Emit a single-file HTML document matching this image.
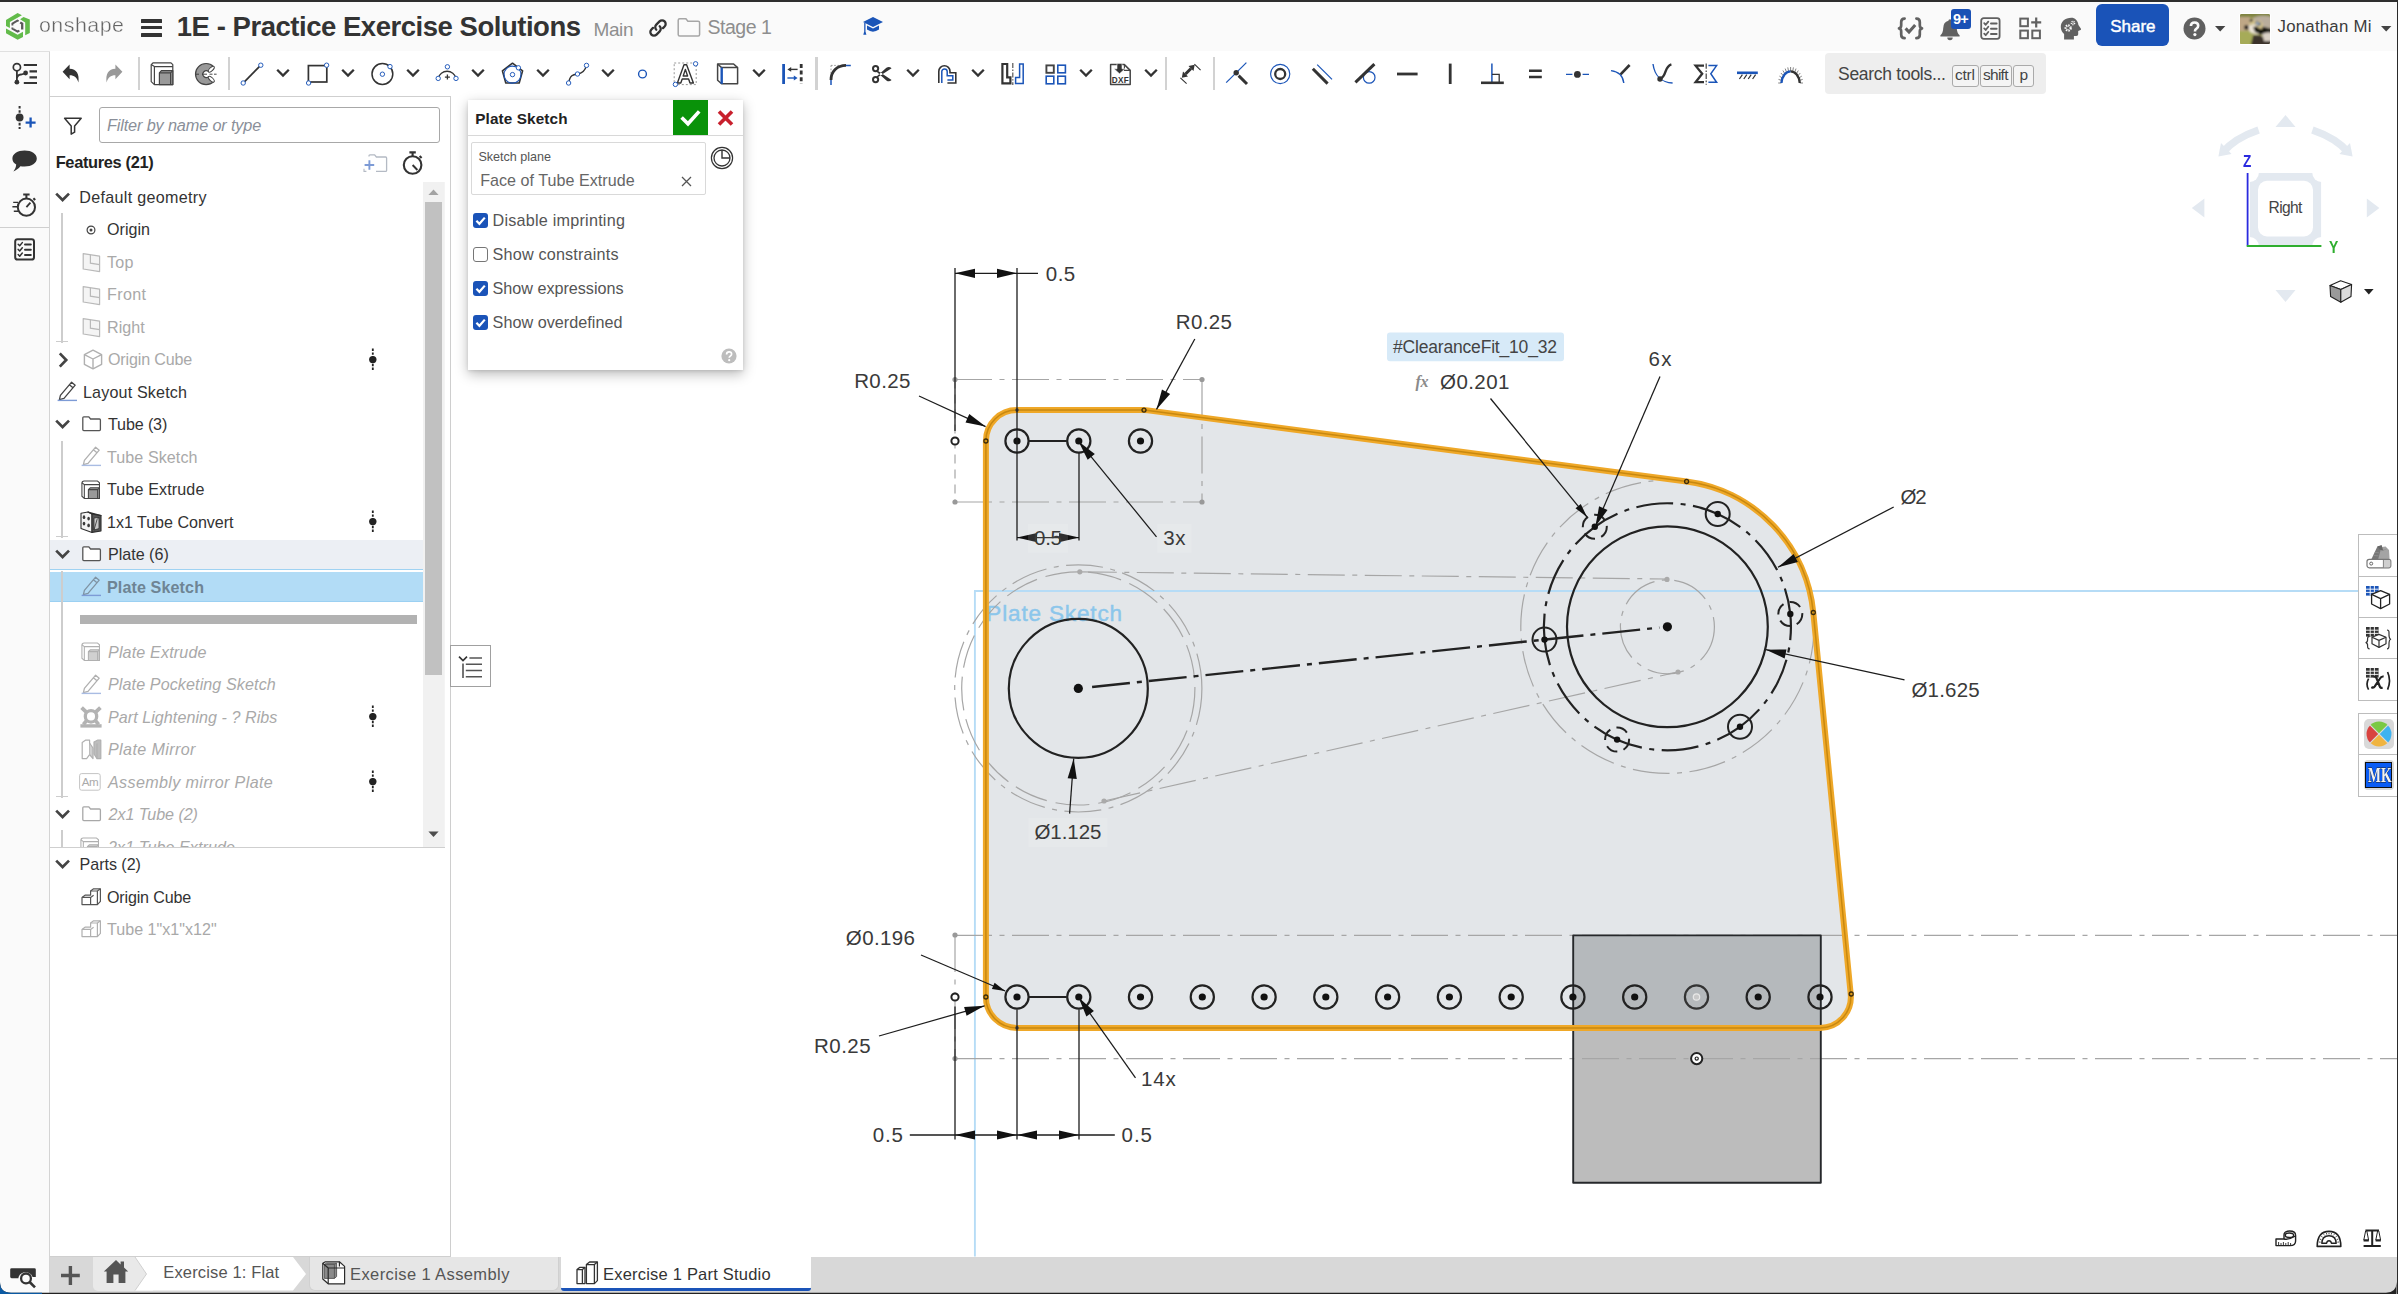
<!DOCTYPE html>
<html><head><meta charset="utf-8"><title>1E - Practice Exercise Solutions</title>
<style>
html,body{margin:0;padding:0;}
body{width:2398px;height:1294px;overflow:hidden;position:relative;background:#fff;font-family:"Liberation Sans",sans-serif;}
.t{position:absolute;white-space:pre;line-height:1em;}
.b{position:absolute;box-sizing:border-box;}
svg{overflow:visible;}
svg text{font-family:"Liberation Sans",sans-serif;}
</style></head><body>
<div class="b" style="left:0px;top:0px;width:2398px;height:51px;background:#fafafa;"></div>
<div class="b" style="left:0px;top:51px;width:50px;height:1243px;background:#fafafa;border-right:1px solid #d4d4d4;"></div>
<div class="b" style="left:0px;top:51px;width:50px;height:1px;background:#e0e0e0;"></div>
<div class="b" style="left:0px;top:227px;width:49px;height:1px;background:#cfcfcf;"></div>
<div class="b" style="left:50px;top:96px;width:401px;height:1px;background:#cfcfcf;"></div>
<div class="b" style="left:450px;top:96px;width:1px;height:1161px;background:#cecece;"></div>
<div class="b" style="left:50px;top:1257px;width:2348px;height:36px;background:#d8d8d8;"></div>
<svg class="b" style="left:0px;top:0px;" width="40" height="50" viewBox="0 0 40 50"><g fill="#62bb4a">
<path d="M17.6 13 L21.9 15.3 L9.9 21.9 L9.9 27.9 L6 26.1 L6 19.9 Z"/>
<path d="M20.1 19.3 L23.5 16.9 L29.8 19.6 L29.8 32.9 L25.2 35.3 L25.2 22.6 Z"/>
<path d="M6 28.4 L17.6 34.7 L23 31.8 L23 36.9 L17.6 39.8 L6 33.2 Z"/></g>
<g fill="none" stroke="#5a5a5a" stroke-width="1.9" stroke-linejoin="miter">
<path d="M18.6 21.2 L17.4 20.6 L12.4 23.6 L12.4 25.4"/><path d="M12.4 27.6 L12.4 28.6 L17.6 31.6 L19.4 30.6"/><path d="M20.2 22.4 L22.2 23.6 L22.2 29.4" stroke-width="2.3"/></g></svg>
<span class="t" style="left:39.1px;top:14.9px;font-size:20.8px;color:#646464;letter-spacing:0.45px;transform:scaleX(1.0291);transform-origin:0 0;-webkit-text-stroke:0.38px #fafafa;">onshape</span>
<div class="b" style="left:141px;top:19px;width:21px;height:3.6px;background:#333;border-radius:0.5px;"></div>
<div class="b" style="left:141px;top:25.8px;width:21px;height:3.6px;background:#333;border-radius:0.5px;"></div>
<div class="b" style="left:141px;top:33px;width:21px;height:3.6px;background:#333;border-radius:0.5px;"></div>
<span class="t" style="left:176.8px;top:12.5px;font-size:27.5px;color:#333;letter-spacing:-0.470px;font-weight:bold;">1E - Practice Exercise Solutions</span>
<span class="t" style="left:593.5px;top:19.7px;font-size:19px;color:#8e8e8e;letter-spacing:-0.395px;">Main</span>
<svg class="b" style="left:647px;top:17px;" width="22" height="22" viewBox="0 0 22 22"><g fill="none" stroke="#333" stroke-width="2.3" stroke-linecap="round">
<path d="M9.3 12.7 a3.6 3.6 0 0 1 0 -5.1 l3.2 -3.2 a3.6 3.6 0 0 1 5.1 5.1 l-1.6 1.6"/>
<path d="M12.7 9.3 a3.6 3.6 0 0 1 0 5.1 l-3.2 3.2 a3.6 3.6 0 0 1 -5.1 -5.1 l1.6 -1.6"/></g></svg>
<svg class="b" style="left:677px;top:17px;" width="24" height="21" viewBox="0 0 24 21"><path d="M1.2 3.2 a1.5 1.5 0 0 1 1.5 -1.5 h6.2 l2 2.6 h10.2 a1.5 1.5 0 0 1 1.5 1.5 v11.6 a1.5 1.5 0 0 1 -1.5 1.5 h-18.4 a1.5 1.5 0 0 1 -1.5 -1.5 z" fill="#fafafa" stroke="#a6a6a6" stroke-width="1.5"/></svg>
<span class="t" style="left:707.5px;top:18.1px;font-size:19.5px;color:#8e8e8e;letter-spacing:-0.486px;">Stage 1</span>
<svg class="b" style="left:862px;top:16px;" width="22" height="20" viewBox="0 0 22 20"><g fill="#1b55b8"><path d="M11 1 L21 6 L11 11 L1 6 Z"/><path d="M5 9.6 L11 12.6 L17 9.6 L17 13.6 Q11 17.8 5 13.6 Z" />
<path d="M2.2 7 h1.3 v8.5 l0.9 3.2 h-3.1 l0.9 -3.2 z"/></g></svg>
<svg class="b" style="left:1897px;top:17px;" width="27" height="23" viewBox="0 0 27 23"><g fill="none" stroke="#616161" stroke-linecap="round" stroke-linejoin="round">
<path d="M7.6 1.6 q-3.4 0 -3.4 3.4 v3.2 q0 2.8 -2.2 3.2 q2.2 0.4 2.2 3.2 v3.2 q0 3.4 3.4 3.4" stroke-width="2.7"/>
<path d="M19.4 1.6 q3.4 0 3.4 3.4 v3.2 q0 2.8 2.2 3.2 q-2.2 0.4 -2.2 3.2 v3.2 q0 3.4 -3.4 3.4" stroke-width="2.7"/>
<path d="M8.6 11.4 l3.4 3.6 l6.2 -7" stroke-width="3.1" stroke-linecap="butt" stroke-linejoin="miter"/></g></svg>
<svg class="b" style="left:1939px;top:18px;" width="24" height="23" viewBox="0 0 24 23"><g fill="#616161"><path d="M11 1.2 q1.6 0 1.6 1.6 q5.2 1.5 5.2 7.4 q0 4.6 2.8 7 v1.3 h-19.2 v-1.3 q2.8 -2.4 2.8 -7 q0 -5.9 5.2 -7.4 q0 -1.6 1.6 -1.6 z"/><path d="M8.3 19.6 h5.4 a2.7 2.7 0 0 1 -5.4 0 z"/></g></svg>
<div class="b" style="left:1950.8px;top:9px;width:20px;height:20px;background:#1a51b5;border-radius:3px;"></div>
<span class="t" style="left:1953.0px;top:12.3px;font-size:14.5px;color:#fff;letter-spacing:-0.731px;font-weight:bold;">9+</span>
<svg class="b" style="left:1980px;top:17px;" width="21" height="23" viewBox="0 0 21 23"><g fill="none" stroke="#616161" stroke-width="1.8" stroke-linecap="round" stroke-linejoin="round">
<rect x="1.2" y="1.2" width="18.4" height="20.6" rx="2.5"/>
<path d="M4.2 6.2 l1.5 1.6 l2.6 -3.2 M4.2 11.4 l1.5 1.6 l2.6 -3.2 M4.2 16.6 l1.5 1.6 l2.6 -3.2"/>
<path d="M11 6.5 h5.6 M11 11.7 h5.6 M11 16.9 h5.6" stroke-width="2"/></g></svg>
<svg class="b" style="left:2019px;top:17px;" width="24" height="23" viewBox="0 0 24 23"><g fill="none" stroke="#616161" stroke-width="2">
<rect x="1.3" y="1.6" width="7.6" height="7.6"/><rect x="1.3" y="13.6" width="7.6" height="7.6"/><rect x="13.3" y="13.6" width="7.6" height="7.6"/>
<path d="M17.2 0.4 v10 M12.2 5.4 h10" stroke-width="2.2"/></g></svg>
<svg class="b" style="left:2059px;top:17px;" width="23" height="23" viewBox="0 0 23 23"><g transform="translate(23 0) scale(-1 1)"><path d="M10.6 0.8 c6.4 0 10.6 3.9 10.6 9.2 c0 3.4 -1.7 5.4 -3.3 7 v5.4 h-9.8 v-3.4 h-2.3 c-1.4 0 -2 -0.8 -2 -2 v-3 l-2.3 -1 c-0.7 -0.3 -0.6 -0.9 -0.3 -1.4 l2.4 -3.7 c0.4 -4.4 3.6 -7.1 7 -7.1 z" fill="#616161"/></g>
<g fill="none" stroke="#fafafa"><circle cx="9.2" cy="11" r="2.5" stroke-width="2.3" stroke-dasharray="1.4 0.9"/><circle cx="14" cy="6" r="1.5" stroke-width="1.7" stroke-dasharray="1 0.7"/></g></svg>
<div class="b" style="left:2096px;top:4px;width:73px;height:42px;background:#1a53b8;border-radius:6px;"></div>
<span class="t" style="left:2110.3px;top:17.8px;font-size:17px;color:#fff;letter-spacing:-0.040px;-webkit-text-stroke:0.45px #fff;">Share</span>
<svg class="b" style="left:2183px;top:16.5px;" width="23" height="23" viewBox="0 0 23 23"><circle cx="11.5" cy="11.5" r="11" fill="#606060"/>
<path d="M7.9 9.1 q0 -3.6 3.7 -3.6 q3.6 0 3.6 3.2 q0 1.9 -1.7 2.9 q-1.5 0.9 -1.5 2.3 v0.5" fill="none" stroke="#fafafa" stroke-width="2.6"/><circle cx="11.9" cy="17.6" r="1.6" fill="#fafafa"/></svg>
<svg class="b" style="left:2214.5px;top:25.5px;" width="11" height="6" viewBox="0 0 11 6"><path d="M0 0 h10.4 l-5.2 5.6 z" fill="#444"/></svg>
<div class="b" style="left:2239px;top:13px;width:32px;height:32px;background:#fff;border-radius:3px;"></div>
<svg class="b" style="left:2240px;top:14px;" width="30" height="30" viewBox="0 0 30 30"><defs><clipPath id="av"><rect width="30" height="30" rx="1.6"/></clipPath><filter id="avb" x="-20%" y="-20%" width="140%" height="140%"><feGaussianBlur stdDeviation="0.9"/></filter></defs>
<g clip-path="url(#av)"><rect width="30" height="30" fill="#9c9a58"/><g filter="url(#avb)">
<rect x="-2" y="-2" width="34" height="5" fill="#7f8440"/>
<rect x="-2" y="3" width="12" height="14" fill="#bfa786"/>
<rect x="-2" y="17" width="14" height="15" fill="#a6ab58"/>
<path d="M13 4 Q20 0 32 3 V15 L14 14 Z" fill="#b9ad9c"/>
<path d="M8 12 Q12 9 19 11 L22 19 Q16 22 10 18 Z" fill="#ece4d6"/>
<ellipse cx="6.4" cy="13.4" rx="2.2" ry="2.4" fill="#141414"/>
<path d="M13 13 L20 12 L32 15 V20 L22 21 L15 18 Z" fill="#141210"/>
<path d="M22 20 Q28 17 32 19 V27 L24 27 Z" fill="#d9d0c6"/>
<path d="M11 30 L13 22 Q18 20 23 23 L24 27 L32 27 V32 H11 Z" fill="#3a302a"/>
<path d="M9 6 L13 4.6 L15 7 L20 6.6 L23 10 L22 15 L19 14.6 L14.4 10 L9.4 10 Z" fill="#d6c48c"/>
<ellipse cx="11.2" cy="6.6" rx="2" ry="1.2" transform="rotate(-20 11.2 6.6)" fill="#2a2a30"/>
<ellipse cx="18" cy="9.6" rx="3" ry="2" transform="rotate(20 18 9.6)" fill="#5f6d80"/>
<ellipse cx="17.4" cy="9.6" rx="1.2" ry="1" fill="#c5d0dc"/>
</g></g></svg>
<span class="t" style="left:2277.5px;top:19.2px;font-size:16.8px;color:#3c3c3c;letter-spacing:0.247px;">Jonathan Mi</span>
<svg class="b" style="left:2380.5px;top:25.5px;" width="11" height="6" viewBox="0 0 11 6"><path d="M0 0 h10.4 l-5.2 5.6 z" fill="#444"/></svg>
<div class="b" style="left:1825px;top:53px;width:221px;height:41px;background:#eeeeee;border-radius:4px;"></div>
<span class="t" style="left:1838.0px;top:66.0px;font-size:17.5px;color:#444;letter-spacing:-0.277px;">Search tools...</span>
<div class="b" style="left:1951.5px;top:65px;width:27px;height:21.5px;background:#f4f4f4;border:1px solid #aaa;border-radius:3px;"></div>
<span class="t" style="left:1955.0px;top:67.4px;font-size:15.5px;color:#444;letter-spacing:-0.220px;">ctrl</span>
<div class="b" style="left:1979.5px;top:65px;width:32.5px;height:21.5px;background:#f4f4f4;border:1px solid #aaa;border-radius:3px;"></div>
<span class="t" style="left:1983.0px;top:67.4px;font-size:15.5px;color:#444;letter-spacing:-0.731px;">shift</span>
<div class="b" style="left:2012.5px;top:65px;width:21.5px;height:21.5px;background:#f4f4f4;border:1px solid #aaa;border-radius:3px;"></div>
<span class="t" style="left:2019.5px;top:67.4px;font-size:15.5px;color:#444;">p</span>
<svg class="b" style="left:10px;top:61px;" width="28" height="25" viewBox="0 0 28 25"><g stroke="#333" fill="none">
<path d="M13.8 4 h13.2 M19.5 10.4 h7.5 M19.5 16.4 h7.5 M13.8 22 h13.2" stroke-width="2.2"/>
<circle cx="6.9" cy="6.2" r="3.6" stroke-width="1.7"/>
<path d="M6.9 10 V21 M6.9 17.5 q0.2 -3.6 4 -4 l4 -1" stroke-width="1.8"/></g>
<circle cx="6.9" cy="21.2" r="2.4" fill="#333"/><circle cx="15.6" cy="12" r="2.4" fill="#333"/></svg>
<svg class="b" style="left:58px;top:61.5px;" width="24" height="24" viewBox="0 0 24 24"><path d="M4.6 9.8 L11.6 2.6 L11.6 6.8 C18.6 6.8 21.6 12.4 20.4 20.4 C19 15.6 16.4 13.2 11.6 13.2 L11.6 17.2 Z" fill="#333"/></svg>
<svg class="b" style="left:103px;top:61.5px;" width="24" height="24" viewBox="0 0 24 24"><path d="M19.4 9.8 L12.4 2.6 L12.4 6.8 C5.4 6.8 2.4 12.4 3.6 20.4 C5 15.6 7.6 13.2 12.4 13.2 L12.4 17.2 Z" fill="#999"/></svg>
<div class="b" style="left:137.7px;top:57px;width:2.6px;height:33px;background:#d2d2d2;"></div>
<svg class="b" style="left:150px;top:61.5px;" width="24" height="24" viewBox="0 0 24 24"><g stroke="#444" stroke-width="1.2" fill="none" stroke-linejoin="round">
<path d="M1.2 2.6 L3.2 0.8 H21 L22.8 2.6 V22.6 H4.4 L1.2 19.6 Z" fill="#fff"/><path d="M1.2 2.6 L4.4 4.6 V22.6 M4.4 4.6 H22.8"/>
<path d="M9.4 10.8 L11.4 8.6 H22.8 V22.6 H9.4 Z" fill="#999"/><path d="M9.4 10.8 H20.6 V22.6 M20.6 10.8 L22.8 8.6" /></g></svg>
<svg class="b" style="left:194px;top:61.5px;" width="24" height="24" viewBox="0 0 24 24"><path d="M19.6 4.6 A10.6 10.6 0 1 0 19.6 19.6 L14.6 14.6 A3.4 3.4 0 1 1 14.6 9.6 Z" fill="#999" stroke="#444" stroke-width="1.2" stroke-linejoin="round"/>
<ellipse cx="17.3" cy="7.2" rx="3.8" ry="1.7" transform="rotate(-45 17.3 7.2)" fill="#fff" stroke="#444" stroke-width="1"/>
<ellipse cx="17.3" cy="17.2" rx="3.8" ry="1.7" transform="rotate(45 17.3 17.2)" fill="#fff" stroke="#444" stroke-width="1"/>
<path d="M2 12.2 h3 M8 12.2 h5 M15.5 12.2 h3 M20 12.2 h2.6" stroke="#333" stroke-width="0.9"/></svg>
<div class="b" style="left:227.7px;top:57px;width:2.6px;height:33px;background:#d2d2d2;"></div>
<svg class="b" style="left:240px;top:61.5px;" width="24" height="24" viewBox="0 0 24 24"><path d="M3.4 20.8 L20.6 3.4" stroke="#333" stroke-width="1.7"/><circle cx="3.2" cy="21" r="2.2" fill="#fff" stroke="#1b55b8" stroke-width="0.95"/><circle cx="20.8" cy="3.2" r="2.2" fill="#fff" stroke="#1b55b8" stroke-width="0.95"/></svg>
<svg class="b" style="left:276px;top:68.4px;" width="14" height="10" viewBox="0 0 14 10"><path d="M1.2 1.8 L7 7.6 L12.8 1.8" fill="none" stroke="#333" stroke-width="2.3"/></svg>
<svg class="b" style="left:305px;top:61.5px;" width="24" height="24" viewBox="0 0 24 24"><rect x="3.4" y="3.6" width="18.4" height="16.4" fill="none" stroke="#333" stroke-width="1.7"/><circle cx="21.6" cy="3.2" r="2.2" fill="#fff" stroke="#1b55b8" stroke-width="0.95"/><circle cx="3.6" cy="21" r="2.2" fill="#fff" stroke="#1b55b8" stroke-width="0.95"/></svg>
<svg class="b" style="left:341px;top:68.4px;" width="14" height="10" viewBox="0 0 14 10"><path d="M1.2 1.8 L7 7.6 L12.8 1.8" fill="none" stroke="#333" stroke-width="2.3"/></svg>
<svg class="b" style="left:370px;top:61.5px;" width="24" height="24" viewBox="0 0 24 24"><circle cx="12.4" cy="12" r="10.4" fill="none" stroke="#333" stroke-width="1.5"/><circle cx="12.4" cy="12.2" r="2.2" fill="#fff" stroke="#1b55b8" stroke-width="0.95"/><circle cx="20" cy="4.6" r="2.2" fill="#fff" stroke="#1b55b8" stroke-width="0.95"/></svg>
<svg class="b" style="left:406px;top:68.4px;" width="14" height="10" viewBox="0 0 14 10"><path d="M1.2 1.8 L7 7.6 L12.8 1.8" fill="none" stroke="#333" stroke-width="2.3"/></svg>
<svg class="b" style="left:435px;top:61.5px;" width="24" height="24" viewBox="0 0 24 24"><path d="M3.2 16.4 A9.2 9.6 0 0 1 21 16.4" fill="none" stroke="#333" stroke-width="1.5"/><path d="M12.4 12.6 v5 M9.9 15.1 h5" stroke="#333" stroke-width="1.3"/><circle cx="3.2" cy="16.4" r="2.2" fill="#fff" stroke="#1b55b8" stroke-width="0.95"/><circle cx="12.4" cy="4.8" r="2.2" fill="#fff" stroke="#1b55b8" stroke-width="0.95"/><circle cx="21" cy="16.4" r="2.2" fill="#fff" stroke="#1b55b8" stroke-width="0.95"/></svg>
<svg class="b" style="left:471px;top:68.4px;" width="14" height="10" viewBox="0 0 14 10"><path d="M1.2 1.8 L7 7.6 L12.8 1.8" fill="none" stroke="#333" stroke-width="2.3"/></svg>
<svg class="b" style="left:500px;top:61.5px;" width="24" height="24" viewBox="0 0 24 24"><path d="M12.5 1.2 L22.6 8.8 L19.2 21 H5.8 L2.4 8.8 Z" fill="none" stroke="#333" stroke-width="1.6" stroke-linejoin="round"/><circle cx="12.5" cy="12.6" r="8.5" fill="none" stroke="#1b55b8" stroke-width="1.1"/><circle cx="12.5" cy="12.6" r="2.2" fill="#fff" stroke="#1b55b8" stroke-width="0.95"/><circle cx="18.4" cy="5.8" r="2.2" fill="#fff" stroke="#1b55b8" stroke-width="0.95"/></svg>
<svg class="b" style="left:536px;top:68.4px;" width="14" height="10" viewBox="0 0 14 10"><path d="M1.2 1.8 L7 7.6 L12.8 1.8" fill="none" stroke="#333" stroke-width="2.3"/></svg>
<svg class="b" style="left:565px;top:61.5px;" width="24" height="24" viewBox="0 0 24 24"><path d="M3.6 21 C5 13 8 12.6 12.4 12 C17 11.4 20 9 21.4 3.6" fill="none" stroke="#333" stroke-width="1.5"/><circle cx="3.6" cy="21" r="2.2" fill="#fff" stroke="#1b55b8" stroke-width="0.95"/><circle cx="12.5" cy="12" r="2.2" fill="#fff" stroke="#1b55b8" stroke-width="0.95"/><circle cx="21.5" cy="3.4" r="2.2" fill="#fff" stroke="#1b55b8" stroke-width="0.95"/></svg>
<svg class="b" style="left:601px;top:68.4px;" width="14" height="10" viewBox="0 0 14 10"><path d="M1.2 1.8 L7 7.6 L12.8 1.8" fill="none" stroke="#333" stroke-width="2.3"/></svg>
<svg class="b" style="left:630px;top:61.5px;" width="24" height="24" viewBox="0 0 24 24"><circle cx="12.5" cy="12" r="3.9" fill="#fff" stroke="#1b55b8" stroke-width="1.4"/></svg>
<svg class="b" style="left:673px;top:61.5px;" width="24" height="24" viewBox="0 0 24 24"><rect x="1.2" y="1" width="22" height="21.6" fill="none" stroke="#999" stroke-width="1" stroke-dasharray="2 2"/>
<path d="M4.4 21 L11 2.8 H13.6 L20.4 21 H17 L15.6 17 H9.2 L7.8 21 Z M10.2 14 H14.6 L12.4 7.4 Z" fill="#fff" stroke="#333" stroke-width="1.4" stroke-linejoin="round"/><circle cx="22.6" cy="1.8" r="2.2" fill="#fff" stroke="#1b55b8" stroke-width="0.95"/><circle cx="2.4" cy="22.4" r="2.2" fill="#fff" stroke="#1b55b8" stroke-width="0.95"/></svg>
<svg class="b" style="left:716px;top:61.5px;" width="24" height="24" viewBox="0 0 24 24"><g fill="none" stroke="#444" stroke-width="1.5" stroke-linejoin="round"><path d="M1.6 2 H17.6 L21.6 5.6 V21.8 H5.6 L1.6 18.2 Z"/><path d="M5.6 5.6 H21.6 M1.6 2 L5.6 5.6"/></g>
<path d="M5.7 5.6 V21.8" stroke="#1b55b8" stroke-width="2.4"/></svg>
<svg class="b" style="left:752px;top:68.4px;" width="14" height="10" viewBox="0 0 14 10"><path d="M1.2 1.8 L7 7.6 L12.8 1.8" fill="none" stroke="#333" stroke-width="2.3"/></svg>
<svg class="b" style="left:781px;top:61.5px;" width="24" height="24" viewBox="0 0 24 24"><path d="M2.6 2 V22" stroke="#1b55b8" stroke-width="2.8"/><path d="M20.2 2 V22" stroke="#333" stroke-width="2.8" stroke-dasharray="4 2.6"/>
<path d="M9 7.4 H16.6" stroke="#333" stroke-width="1.4"/><path d="M6.4 7.4 L10.2 5 V9.8 Z" fill="#333"/>
<path d="M6.4 16 H14" stroke="#1b55b8" stroke-width="1.4"/><path d="M16.6 16 L12.8 13.6 V18.4 Z" fill="#1b55b8"/></svg>
<div class="b" style="left:815.2px;top:57px;width:2.6px;height:33px;background:#d2d2d2;"></div>
<svg class="b" style="left:828px;top:61.5px;" width="24" height="24" viewBox="0 0 24 24"><path d="M3 3.4 H17.6 M3 3.4 V18" stroke="#999" stroke-width="1" stroke-dasharray="1.6 1.6" fill="none"/>
<path d="M3 23 V17.6 M17.4 3.4 H22.8" stroke="#1b55b8" stroke-width="1.5"/>
<path d="M3 18 C3 9.6 9 3.4 18 3.4" fill="none" stroke="#333" stroke-width="2.8"/></svg>
<svg class="b" style="left:870px;top:61.5px;" width="24" height="24" viewBox="0 0 24 24"><g fill="none" stroke="#333"><circle cx="5.6" cy="6.6" r="2.6" stroke-width="2"/><circle cx="5.6" cy="17.6" r="2.6" stroke-width="2"/></g>
<path d="M7.4 8.6 L21.6 18 Q19 20.4 16.4 18.4 L6.6 9.8 Z M7.4 15.6 L21.6 6.2 Q19 3.8 16.4 5.8 L6.6 14.4 Z" fill="#333"/><circle cx="11.3" cy="12.1" r="1" fill="#fff"/></svg>
<svg class="b" style="left:906px;top:68.4px;" width="14" height="10" viewBox="0 0 14 10"><path d="M1.2 1.8 L7 7.6 L12.8 1.8" fill="none" stroke="#333" stroke-width="2.3"/></svg>
<svg class="b" style="left:935px;top:61.5px;" width="24" height="24" viewBox="0 0 24 24"><path d="M3.8 21 V9.4 A5.6 5.6 0 0 1 15 9.4 V10.8 H20.8 V21 H12.4" fill="none" stroke="#333" stroke-width="1.6"/>
<path d="M6.8 21 V9.6 A2.7 2.7 0 0 1 12.2 9.6 V13.8 H17.8 V18 H12.4" fill="none" stroke="#1b55b8" stroke-width="1.5"/></svg>
<svg class="b" style="left:971px;top:68.4px;" width="14" height="10" viewBox="0 0 14 10"><path d="M1.2 1.8 L7 7.6 L12.8 1.8" fill="none" stroke="#333" stroke-width="2.3"/></svg>
<svg class="b" style="left:1000px;top:61.5px;" width="24" height="24" viewBox="0 0 24 24"><path d="M2.4 2 V21.4 H10.4 V15.4 H7.2 V2 Z" fill="none" stroke="#333" stroke-width="2.2"/>
<path d="M23.2 2 V21.4 H15.6 V15.4 H19.6 V2 Z" fill="none" stroke="#1b55b8" stroke-width="1.5"/>
<path d="M12.8 1 V23" stroke="#555" stroke-width="1.2" stroke-dasharray="5 1.6 1.4 1.6"/></svg>
<svg class="b" style="left:1043px;top:61.5px;" width="24" height="24" viewBox="0 0 24 24"><rect x="3.4" y="3.4" width="7.4" height="7.4" fill="none" stroke="#444" stroke-width="1.9"/>
<g fill="none" stroke="#1b55b8" stroke-width="1.6"><rect x="14.8" y="3.2" width="7.6" height="7.6"/><rect x="3.2" y="14.2" width="7.6" height="7.6"/><rect x="14.8" y="14.2" width="7.6" height="7.6"/></g></svg>
<svg class="b" style="left:1079px;top:68.4px;" width="14" height="10" viewBox="0 0 14 10"><path d="M1.2 1.8 L7 7.6 L12.8 1.8" fill="none" stroke="#333" stroke-width="2.3"/></svg>
<svg class="b" style="left:1108px;top:61.5px;" width="24" height="24" viewBox="0 0 24 24"><path d="M2.6 2.6 H16.4 L22.2 8.4 V22.6 H2.6 Z" fill="#fff" stroke="#444" stroke-width="1.5" stroke-linejoin="round"/><path d="M16.4 2.6 V8.4 H22.2" fill="none" stroke="#444" stroke-width="1.1"/>
<path d="M9 1.4 h5 v5.4 h3 l-5.5 5 l-5.5 -5 h3 z" fill="#333" stroke="#fff" stroke-width="0.6"/>
<text x="12.4" y="20.6" font-size="8.2" font-weight="bold" text-anchor="middle" fill="#333" letter-spacing="0.3">DXF</text></svg>
<svg class="b" style="left:1144px;top:68.4px;" width="14" height="10" viewBox="0 0 14 10"><path d="M1.2 1.8 L7 7.6 L12.8 1.8" fill="none" stroke="#333" stroke-width="2.3"/></svg>
<div class="b" style="left:1164.7px;top:57px;width:2.6px;height:33px;background:#d2d2d2;"></div>
<svg class="b" style="left:1178px;top:61.5px;" width="24" height="24" viewBox="0 0 24 24"><path d="M7.5 12 L13 6.5" stroke="#333" stroke-width="3"/><path d="M3.8 15.7 L10 14.5 L5 9.5 Z M16.7 2.8 L15.5 9 L10.5 4 Z" fill="#333"/>
<path d="M16.4 2.2 L22.6 8.1 M2.4 15.8 L8.6 21.6" stroke="#333" stroke-width="1.1"/></svg>
<div class="b" style="left:1212.7px;top:57px;width:2.6px;height:33px;background:#d2d2d2;"></div>
<svg class="b" style="left:1225px;top:61.5px;" width="24" height="24" viewBox="0 0 24 24"><path d="M1.2 20.6 L21.4 0.6" stroke="#1b55b8" stroke-width="1.25"/><path d="M13.6 13.6 L22 22" stroke="#333" stroke-width="3"/><circle cx="11.2" cy="10.8" r="2.7" fill="#333"/></svg>
<svg class="b" style="left:1268px;top:61.5px;" width="24" height="24" viewBox="0 0 24 24"><circle cx="12.2" cy="12" r="9.6" fill="none" stroke="#1b55b8" stroke-width="1.15"/><circle cx="12.2" cy="12" r="5" fill="none" stroke="#333" stroke-width="2.3"/></svg>
<svg class="b" style="left:1310px;top:61.5px;" width="24" height="24" viewBox="0 0 24 24"><path d="M2.8 6.8 L17.6 21.6" stroke="#333" stroke-width="3"/><path d="M7.2 2.6 L22 17.4" stroke="#1b55b8" stroke-width="1.25"/></svg>
<svg class="b" style="left:1353px;top:61.5px;" width="24" height="24" viewBox="0 0 24 24"><circle cx="16.2" cy="15.4" r="5.8" fill="none" stroke="#1b55b8" stroke-width="1.2"/><path d="M2.4 20.4 L21.4 2.2" stroke="#333" stroke-width="3"/></svg>
<svg class="b" style="left:1395px;top:61.5px;" width="24" height="24" viewBox="0 0 24 24"><path d="M2 12 H22.6" stroke="#333" stroke-width="2.8"/></svg>
<svg class="b" style="left:1438px;top:61.5px;" width="24" height="24" viewBox="0 0 24 24"><path d="M12.2 1.6 V22" stroke="#333" stroke-width="2.8"/></svg>
<svg class="b" style="left:1480px;top:61.5px;" width="24" height="24" viewBox="0 0 24 24"><path d="M11.9 1.6 V20.6" stroke="#1b55b8" stroke-width="1.5"/><path d="M12 12.4 H19.2 V20" fill="none" stroke="#333" stroke-width="1.3"/><path d="M1 20.8 H23.8" stroke="#333" stroke-width="2.6"/></svg>
<svg class="b" style="left:1523px;top:61.5px;" width="24" height="24" viewBox="0 0 24 24"><path d="M6 8.8 H18.8 M6 15 H18.8" stroke="#333" stroke-width="2.6"/></svg>
<svg class="b" style="left:1565px;top:61.5px;" width="24" height="24" viewBox="0 0 24 24"><path d="M1 12.4 H7.4 M17.6 12.4 H24" stroke="#1b55b8" stroke-width="1.4"/><circle cx="12.4" cy="12.4" r="3.4" fill="#333"/></svg>
<svg class="b" style="left:1608px;top:61.5px;" width="24" height="24" viewBox="0 0 24 24"><path d="M3 8.6 C11 9.6 15 14 15.8 21" fill="none" stroke="#1b55b8" stroke-width="1.4"/><path d="M12.6 12.4 L21.6 3" stroke="#333" stroke-width="2.6"/></svg>
<svg class="b" style="left:1650px;top:61.5px;" width="24" height="24" viewBox="0 0 24 24"><path d="M3 2 C4.6 14 12 20.6 22.6 21" fill="none" stroke="#1b55b8" stroke-width="1.4"/><path d="M10.4 16.8 C17 14 14 4.6 21.4 2.4" fill="none" stroke="#333" stroke-width="2.4"/><circle cx="10" cy="17" r="2.7" fill="#333"/></svg>
<svg class="b" style="left:1693px;top:61.5px;" width="24" height="24" viewBox="0 0 24 24"><path d="M11 3.6 H2.6 L9.2 11.8 L2.6 20.2 H11" fill="none" stroke="#333" stroke-width="2.3"/>
<path d="M15.4 3.6 H23.6 L17.8 11.8 L23.6 20.2 H15.4" fill="none" stroke="#1b55b8" stroke-width="1.5"/>
<path d="M13.2 1.4 V22.8" stroke="#444" stroke-width="1.2" stroke-dasharray="5.4 1.6 1.6 1.6"/></svg>
<svg class="b" style="left:1735px;top:61.5px;" width="24" height="24" viewBox="0 0 24 24"><path d="M4.4 17 L7.4 12.6 M8.8 17 L11.8 12.6 M13.2 17 L16.2 12.6 M17.6 17 L20.6 12.6" stroke="#333" stroke-width="1.2"/><path d="M2 10.8 H22.8" stroke="#1b55b8" stroke-width="2.6"/></svg>
<svg class="b" style="left:1778px;top:61.5px;" width="24" height="24" viewBox="0 0 24 24"><path d="M3.4 21.0 L0.2 21.0 M3.6 18.4 L0.5 17.4 M4.3 16.0 L1.4 14.1 M5.4 13.8 L2.9 11.0 M6.9 11.9 L4.9 8.5 M8.6 10.5 L7.2 6.6 M10.6 9.7 L9.8 5.4 M12.6 9.4 L12.6 5.0 M14.7 9.7 L15.4 5.4 M16.6 10.6 L18.0 6.6 M18.3 11.9 L20.3 8.5 M19.8 13.8 L22.3 11.0 M20.9 16.0 L23.8 14.1 M21.6 18.4 L24.7 17.4 M21.8 21.0 L25.0 21.0 " stroke="#777" stroke-width="0.9"/><path d="M3.4 21 C4 14 8 9.4 12.6 9.4" fill="none" stroke="#1b55b8" stroke-width="2.4"/><path d="M12.6 9.4 C17.2 9.4 21.2 14 21.8 21" fill="none" stroke="#333" stroke-width="2.4"/></svg>
<svg class="b" style="left:14px;top:105px;" width="24" height="25" viewBox="0 0 24 25"><path d="M5.6 1 V24" stroke="#333" stroke-width="2" stroke-dasharray="2.6 1.6"/><circle cx="5.6" cy="12.4" r="3.9" fill="#333"/>
<path d="M16.6 12.6 V22.6 M11.6 17.6 H21.6" stroke="#1b55b8" stroke-width="2.3"/></svg>
<svg class="b" style="left:12px;top:150px;" width="26" height="22" viewBox="0 0 26 22"><path d="M12.6 0.6 C19.6 0.6 24.8 4 24.8 8.6 C24.8 13.2 19.6 16.6 12.6 16.6 C11 16.6 9.6 16.4 8.4 16.2 C6.6 18.4 4 20.6 1.4 21.4 C3 19.4 4 17.2 4.2 14.6 C1.6 13.2 0.4 11 0.4 8.6 C0.4 4 5.6 0.6 12.6 0.6 Z" fill="#333"/></svg>
<svg class="b" style="left:12px;top:193px;" width="26" height="25" viewBox="0 0 26 25"><g fill="none" stroke="#333"><circle cx="14.4" cy="14.2" r="8.6" stroke-width="2"/><path d="M11.2 1.4 H17.6 M14.4 1.4 V5 M21.4 5.2 L23.2 7" stroke-width="2"/><path d="M14.4 14.2 L18.4 9.6" stroke-width="1.8"/>
<path d="M1.2 9.4 H6 M0.4 13.8 H5 M1.8 18.2 H6" stroke-width="1.4"/></g></svg>
<svg class="b" style="left:14px;top:238px;" width="22" height="23" viewBox="0 0 22 23"><g fill="none" stroke="#333" stroke-linecap="round" stroke-linejoin="round"><rect x="1.2" y="1.2" width="18.8" height="20.4" rx="2.4" stroke-width="2"/>
<path d="M4.2 6.2 l1.5 1.6 l2.6 -3.2 M4.2 11.4 l1.5 1.6 l2.6 -3.2 M4.2 16.6 l1.5 1.6 l2.6 -3.2" stroke-width="1.5"/>
<path d="M11 6.5 h5.8 M11 11.7 h5.8 M11 16.9 h5.8" stroke-width="2"/></g></svg>
<svg class="b" style="left:9px;top:1267px;" width="30" height="22" viewBox="0 0 30 22"><path d="M2.6 1.2 H25.4 Q26.8 1.2 26.8 2.6 V10 H23.6 A7.6 7.6 0 0 0 9.6 10 L9.4 11.2 H2.6 Q1.2 11.2 1.2 9.8 V2.6 Q1.2 1.2 2.6 1.2 Z" fill="#333"/>
<circle cx="17" cy="11.4" r="4.9" fill="#fafafa" stroke="#333" stroke-width="2.3"/><path d="M20.6 15 L26 20.4" stroke="#333" stroke-width="2.6"/></svg>
<svg class="b" style="left:63px;top:116px;" width="20" height="20" viewBox="0 0 20 20"><path d="M1.6 2.2 H18.2 L11.6 10 V16.2 L8.2 18.2 V10 Z" fill="none" stroke="#333" stroke-width="1.5" stroke-linejoin="round"/></svg>
<div class="b" style="left:99px;top:106.5px;width:341px;height:36px;border:1px solid #a8a8a8;border-radius:3px;background:#fff;"></div>
<span class="t" style="left:107.0px;top:116.6px;font-size:16.3px;color:#8a8f99;letter-spacing:-0.150px;font-style:italic;">Filter by name or type</span>
<span class="t" style="left:55.7px;top:153.6px;font-size:16.4px;color:#222;letter-spacing:-0.332px;font-weight:bold;">Features (21)</span>
<svg class="b" style="left:363px;top:154px;" width="26" height="19" viewBox="0 0 26 19"><path d="M6 2.4 V1.8 Q6 0.8 7 0.8 H11.6 L13.4 3 H22.6 Q23.6 3 23.6 4 V16.4 Q23.6 17.4 22.6 17.4 H13" fill="none" stroke="#b4bac4" stroke-width="1.3"/>
<path d="M1 14.8 V17.4 H3.4" fill="none" stroke="#b4bac4" stroke-width="1.1"/><path d="M6.4 6.2 V15.8 M1.6 11 H11.2" stroke="#7d9bd6" stroke-width="1.9"/></svg>
<svg class="b" style="left:401px;top:151px;" width="24" height="25" viewBox="0 0 24 25"><g fill="none" stroke="#333"><circle cx="11.6" cy="14" r="8.8" stroke-width="2.1"/><path d="M8.4 1.4 H14.8 M11.6 1.4 V5 M18.6 5 L20.6 7" stroke-width="2.1"/><path d="M11.6 14 L16.4 19" stroke-width="1.9"/></g></svg>
<div class="b" style="left:422.8px;top:182px;width:21.2px;height:665px;background:#f1f1f1;"></div>
<div class="b" style="left:425px;top:201.5px;width:17px;height:473px;background:#c1c1c1;"></div>
<svg class="b" style="left:428px;top:189px;" width="11" height="7" viewBox="0 0 11 7"><path d="M0.4 6 L5.5 0.6 L10.6 6 Z" fill="#a3a3a3"/></svg>
<svg class="b" style="left:428px;top:831px;" width="11" height="7" viewBox="0 0 11 7"><path d="M0.4 0.6 H10.6 L5.5 6 Z" fill="#4d4d4d"/></svg>
<div class="b" style="left:444px;top:182px;width:1px;height:665px;background:#f4f4f4;"></div>
<div class="b" style="left:50px;top:846.5px;width:395px;height:1px;background:#cfcfcf;"></div>
<div class="b" style="left:50px;top:540px;width:372.8px;height:29.6px;background:#eceff4;border-bottom:1.2px solid #9fd2f2;"></div>
<div class="b" style="left:50px;top:572px;width:372.8px;height:29.5px;background:#b2dcf6;border-bottom:1.2px solid #9bd0f2;"></div>
<div class="b" style="left:80px;top:615px;width:337px;height:9px;background:#b2b2b2;"></div>
<div class="b" style="left:60.9px;top:213px;width:2px;height:129.5px;background:#cdcdcd;"></div>
<div class="b" style="left:56px;top:341.1px;width:12px;height:1.4px;background:#cdcdcd;"></div>
<div class="b" style="left:60.9px;top:441px;width:2px;height:96.5px;background:#cdcdcd;"></div>
<div class="b" style="left:56px;top:536.1px;width:12px;height:1.4px;background:#cdcdcd;"></div>
<div class="b" style="left:60.9px;top:571px;width:2px;height:226.5px;background:#cdcdcd;"></div>
<div class="b" style="left:56px;top:796.1px;width:12px;height:1.4px;background:#cdcdcd;"></div>
<div class="b" style="left:60.9px;top:830px;width:2px;height:16.5px;background:#cdcdcd;"></div>
<span class="t" style="left:79.3px;top:188.8px;font-size:16.1px;color:#333;letter-spacing:0.307px;">Default geometry</span>
<span class="t" style="left:107.0px;top:221.3px;font-size:16.1px;color:#333;letter-spacing:0.011px;">Origin</span>
<span class="t" style="left:107.0px;top:253.8px;font-size:16.1px;color:#a9a9a9;letter-spacing:0.271px;">Top</span>
<span class="t" style="left:107.0px;top:286.3px;font-size:16.1px;color:#a9a9a9;letter-spacing:0.356px;">Front</span>
<span class="t" style="left:107.0px;top:318.8px;font-size:16.1px;color:#a9a9a9;letter-spacing:0.029px;">Right</span>
<span class="t" style="left:108.0px;top:351.3px;font-size:16.1px;color:#a9a9a9;letter-spacing:-0.161px;">Origin Cube</span>
<span class="t" style="left:83.0px;top:383.8px;font-size:16.1px;color:#333;letter-spacing:0.164px;">Layout Sketch</span>
<span class="t" style="left:108.0px;top:416.3px;font-size:16.1px;color:#333;letter-spacing:-0.136px;">Tube (3)</span>
<span class="t" style="left:107.0px;top:448.8px;font-size:16.1px;color:#a9a9a9;letter-spacing:0.071px;">Tube Sketch</span>
<span class="t" style="left:107.0px;top:481.3px;font-size:16.1px;color:#333;letter-spacing:0.122px;">Tube Extrude</span>
<span class="t" style="left:107.0px;top:513.8px;font-size:16.1px;color:#333;letter-spacing:-0.032px;">1x1 Tube Convert</span>
<span class="t" style="left:108.0px;top:546.3px;font-size:16.1px;color:#333;letter-spacing:-0.006px;">Plate (6)</span>
<span class="t" style="left:107.0px;top:578.8px;font-size:16.1px;color:#6e8494;letter-spacing:0.114px;font-weight:bold;">Plate Sketch</span>
<span class="t" style="left:108.0px;top:643.8px;font-size:16.1px;color:#a9a9a9;letter-spacing:0.154px;font-style:italic;">Plate Extrude</span>
<span class="t" style="left:108.0px;top:676.3px;font-size:16.1px;color:#a9a9a9;letter-spacing:0.106px;font-style:italic;">Plate Pocketing Sketch</span>
<span class="t" style="left:108.0px;top:708.8px;font-size:16.1px;color:#a9a9a9;letter-spacing:0.050px;font-style:italic;">Part Lightening - ? Ribs</span>
<span class="t" style="left:108.0px;top:741.3px;font-size:16.1px;color:#a9a9a9;letter-spacing:0.382px;font-style:italic;">Plate Mirror</span>
<span class="t" style="left:108.0px;top:773.8px;font-size:16.1px;color:#a9a9a9;letter-spacing:0.367px;font-style:italic;">Assembly mirror Plate</span>
<span class="t" style="left:108.5px;top:806.3px;font-size:16.1px;color:#a9a9a9;letter-spacing:-0.053px;font-style:italic;">2x1 Tube (2)</span>
<div class="b" style="left:50px;top:832px;width:373px;height:14.5px;overflow:hidden;">
<span class="t" style="left:58.0px;top:6.8px;font-size:16.1px;color:#a9a9a9;letter-spacing:0.074px;font-style:italic;">2x1 Tube Extrude</span>
<svg class="b" style="left:29.9px;top:5.1px;" width="19.4" height="19.4" viewBox="0 0 21 21"><g stroke="#b0b0b0" stroke-width="1.15" fill="none" stroke-linejoin="round"><path d="M1 3.4 Q1 1 3.4 1 H17.6 L20 3 V20 H3.6 L1 17.6 Z" fill="#fff"/><path d="M1 3 L3.6 5 V20 M3.6 5 H20"/>
<path d="M8 10.4 L10 8.4 H20 V20 H8 Z" fill="#d0d0d0"/><path d="M8 10.4 H18 V20 M18 10.4 L20 8.4"/></g></svg>
</div>
<svg class="b" style="left:55px;top:191.5px;" width="16" height="11" viewBox="0 0 16 11"><path d="M1.2 1.6 L7.6 8 L14 1.6" fill="none" stroke="#444" stroke-width="2.7"/></svg>
<svg class="b" style="left:84.5px;top:223.5px;" width="12" height="12" viewBox="0 0 12 12"><circle cx="6" cy="6" r="3.9" fill="#fff" stroke="#444" stroke-width="1.2"/><circle cx="6" cy="6" r="1.5" fill="#444"/></svg>
<svg class="b" style="left:81.5px;top:252.0px;" width="20" height="21" viewBox="0 0 20 21"><path d="M1.2 1.6 L17.6 4.2 V19.6 L1.2 17 Z" fill="#f4f4f4" stroke="#b9b9b9" stroke-width="1.2" stroke-linejoin="round"/><path d="M8.4 2.8 V11.2 L17.6 12.6" fill="none" stroke="#b9b9b9" stroke-width="1.2"/></svg>
<svg class="b" style="left:81.5px;top:284.5px;" width="20" height="21" viewBox="0 0 20 21"><path d="M1.2 1.6 L17.6 4.2 V19.6 L1.2 17 Z" fill="#f4f4f4" stroke="#b9b9b9" stroke-width="1.2" stroke-linejoin="round"/><path d="M8.4 2.8 V11.2 L17.6 12.6" fill="none" stroke="#b9b9b9" stroke-width="1.2"/></svg>
<svg class="b" style="left:81.5px;top:317.0px;" width="20" height="21" viewBox="0 0 20 21"><path d="M1.2 1.6 L17.6 4.2 V19.6 L1.2 17 Z" fill="#f4f4f4" stroke="#b9b9b9" stroke-width="1.2" stroke-linejoin="round"/><path d="M8.4 2.8 V11.2 L17.6 12.6" fill="none" stroke="#b9b9b9" stroke-width="1.2"/></svg>
<svg class="b" style="left:57.5px;top:351.5px;" width="11" height="16" viewBox="0 0 11 16"><path d="M1.8 1.4 L8.2 8 L1.8 14.6" fill="none" stroke="#444" stroke-width="2.7"/></svg>
<svg class="b" style="left:82.5px;top:349.0px;" width="20" height="21" viewBox="0 0 20 21"><g fill="none" stroke="#b0b0b0" stroke-width="1.4" stroke-linejoin="round"><path d="M10 1.2 L18.6 5.6 V15.4 L10 19.8 L1.4 15.4 V5.6 Z"/><path d="M1.4 5.6 L10 10 L18.6 5.6 M10 10 V19.8"/></g></svg>
<svg class="b" style="left:368px;top:347.5px;" width="10" height="24" viewBox="0 0 10 24"><path d="M4.8 0.6 V23.4" stroke="#222" stroke-width="1.8" stroke-dasharray="2.4 1.4"/><circle cx="4.8" cy="11.6" r="3.7" fill="#222"/></svg>
<svg class="b" style="left:57px;top:380.0px;" width="21" height="21" viewBox="0 0 21 21"><path d="M3.4 15.4 L14.6 2.2 L18.2 5.2 L7 18.4 L2.4 19.6 Z M12.4 4.8 L16 7.8" fill="none" stroke="#444" stroke-width="1.3" stroke-linejoin="round"/><path d="M0.6 20.4 H20" stroke="#7d9bd6" stroke-width="1.4"/></svg>
<svg class="b" style="left:55px;top:419.0px;" width="16" height="11" viewBox="0 0 16 11"><path d="M1.2 1.6 L7.6 8 L14 1.6" fill="none" stroke="#444" stroke-width="2.7"/></svg>
<svg class="b" style="left:81.9px;top:416.1px;" width="20" height="16" viewBox="0 0 20 16"><path d="M0.8 1.8 Q0.8 0.8 1.8 0.8 H6.8 L8.6 3 H17.4 Q18.4 3 18.4 4 V13.6 Q18.4 14.6 17.4 14.6 H1.8 Q0.8 14.6 0.8 13.6 Z" fill="#fff" stroke="#555" stroke-width="1.3"/></svg>
<svg class="b" style="left:81px;top:445.0px;" width="21" height="21" viewBox="0 0 21 21"><path d="M3.4 15.4 L14.6 2.2 L18.2 5.2 L7 18.4 L2.4 19.6 Z M12.4 4.8 L16 7.8" fill="none" stroke="#b0b0b0" stroke-width="1.3" stroke-linejoin="round"/><path d="M0.6 20.4 H20" stroke="#a9bce3" stroke-width="1.4"/></svg>
<svg class="b" style="left:80.9px;top:479.6px;" width="19.4" height="19.4" viewBox="0 0 21 21"><g stroke="#444" stroke-width="1.15" fill="none" stroke-linejoin="round"><path d="M1 3.4 Q1 1 3.4 1 H17.6 L20 3 V20 H3.6 L1 17.6 Z" fill="#fff"/><path d="M1 3 L3.6 5 V20 M3.6 5 H20"/>
<path d="M8 10.4 L10 8.4 H20 V20 H8 Z" fill="#999"/><path d="M8 10.4 H18 V20 M18 10.4 L20 8.4"/></g></svg>
<svg class="b" style="left:80px;top:511.0px;" width="22" height="22" viewBox="0 0 22 22"><g stroke="#2e2e2e" stroke-width="1.1" stroke-linejoin="round"><path d="M1 2.2 L8 1 L12 3 V21.4 L1 17.6 Z" fill="#f4f4f4"/>
<path d="M8 1 L21 4.6 L12 3 Z" fill="#ddd"/><path d="M12 3 L21 4.6 V20 L12 21.4 Z" fill="#555"/><path d="M14 7 L19 6.4 V17.6 L14 19 Z" fill="#c9c9c9" stroke-width="0.8"/><path d="M14 19 L17 8.6 L19 6.4" fill="none" stroke-width="0.8"/></g>
<g fill="#3a3a3a"><ellipse cx="4" cy="6.2" rx="1.3" ry="1.9"/><ellipse cx="8.6" cy="7.6" rx="1.3" ry="1.9"/><ellipse cx="4" cy="12.6" rx="1.3" ry="1.9"/><ellipse cx="8.6" cy="14.4" rx="1.3" ry="1.9"/></g></svg>
<svg class="b" style="left:368px;top:510.0px;" width="10" height="24" viewBox="0 0 10 24"><path d="M4.8 0.6 V23.4" stroke="#222" stroke-width="1.8" stroke-dasharray="2.4 1.4"/><circle cx="4.8" cy="11.6" r="3.7" fill="#222"/></svg>
<svg class="b" style="left:55px;top:549.0px;" width="16" height="11" viewBox="0 0 16 11"><path d="M1.2 1.6 L7.6 8 L14 1.6" fill="none" stroke="#444" stroke-width="2.7"/></svg>
<svg class="b" style="left:81.9px;top:546.1px;" width="20" height="16" viewBox="0 0 20 16"><path d="M0.8 1.8 Q0.8 0.8 1.8 0.8 H6.8 L8.6 3 H17.4 Q18.4 3 18.4 4 V13.6 Q18.4 14.6 17.4 14.6 H1.8 Q0.8 14.6 0.8 13.6 Z" fill="#fff" stroke="#555" stroke-width="1.3"/></svg>
<svg class="b" style="left:81px;top:575.0px;" width="21" height="21" viewBox="0 0 21 21"><path d="M3.4 15.4 L14.6 2.2 L18.2 5.2 L7 18.4 L2.4 19.6 Z M12.4 4.8 L16 7.8" fill="none" stroke="#7f93a3" stroke-width="1.3" stroke-linejoin="round"/><path d="M0.6 20.4 H20" stroke="#7d9bd6" stroke-width="1.4"/></svg>
<svg class="b" style="left:80.9px;top:642.1px;" width="19.4" height="19.4" viewBox="0 0 21 21"><g stroke="#b0b0b0" stroke-width="1.15" fill="none" stroke-linejoin="round"><path d="M1 3.4 Q1 1 3.4 1 H17.6 L20 3 V20 H3.6 L1 17.6 Z" fill="#fff"/><path d="M1 3 L3.6 5 V20 M3.6 5 H20"/>
<path d="M8 10.4 L10 8.4 H20 V20 H8 Z" fill="#d0d0d0"/><path d="M8 10.4 H18 V20 M18 10.4 L20 8.4"/></g></svg>
<svg class="b" style="left:81px;top:672.5px;" width="21" height="21" viewBox="0 0 21 21"><path d="M3.4 15.4 L14.6 2.2 L18.2 5.2 L7 18.4 L2.4 19.6 Z M12.4 4.8 L16 7.8" fill="none" stroke="#b0b0b0" stroke-width="1.3" stroke-linejoin="round"/><path d="M0.6 20.4 H20" stroke="#a9bce3" stroke-width="1.4"/></svg>
<svg class="b" style="left:79.5px;top:706.0px;" width="22" height="22" viewBox="0 0 22 22"><rect x="0.4" y="18.2" width="21.2" height="3.4" fill="#b3b3b3"/>
<path d="M1.6 1.6 L6.6 6.4 M20.4 1.6 L15.4 6.4 M6.6 14.6 L3.4 18.4 M15.4 14.6 L18.6 18.4" stroke="#b3b3b3" stroke-width="3.8"/>
<circle cx="11" cy="10.4" r="5.7" fill="#fff" stroke="#b3b3b3" stroke-width="3.3"/></svg>
<svg class="b" style="left:368px;top:705.0px;" width="10" height="24" viewBox="0 0 10 24"><path d="M4.8 0.6 V23.4" stroke="#222" stroke-width="1.8" stroke-dasharray="2.4 1.4"/><circle cx="4.8" cy="11.6" r="3.7" fill="#222"/></svg>
<svg class="b" style="left:80.5px;top:739.0px;" width="21" height="21" viewBox="0 0 21 21"><g stroke="#b0b0b0" stroke-width="1.2" stroke-linejoin="round"><path d="M1.2 3.4 L4.4 1.2 H8.6 V15.6 L5.6 19.6 H1.2 Z" fill="#fff"/><path d="M8.6 4 L12 9 V19.6 L8.6 15.6" fill="#cfcfcf"/>
<path d="M13 3 L16.4 1.2 H19.8 V19.6 H16 L13 15 Z" fill="#bdbdbd"/><path d="M16 4.6 V19.6" fill="none"/></g></svg>
<svg class="b" style="left:79px;top:772.8px;" width="23" height="19" viewBox="0 0 23 19"><rect x="0.6" y="0.6" width="20.6" height="16.6" rx="2" fill="#fff" stroke="#c4c4c4" stroke-width="1"/><text x="10.9" y="13.4" font-size="11.6" text-anchor="middle" fill="#aaa" letter-spacing="-0.5">Am</text></svg>
<svg class="b" style="left:368px;top:770.0px;" width="10" height="24" viewBox="0 0 10 24"><path d="M4.8 0.6 V23.4" stroke="#222" stroke-width="1.8" stroke-dasharray="2.4 1.4"/><circle cx="4.8" cy="11.6" r="3.7" fill="#222"/></svg>
<svg class="b" style="left:55px;top:809.0px;" width="16" height="11" viewBox="0 0 16 11"><path d="M1.2 1.6 L7.6 8 L14 1.6" fill="none" stroke="#444" stroke-width="2.7"/></svg>
<svg class="b" style="left:81.9px;top:806.1px;" width="20" height="16" viewBox="0 0 20 16"><path d="M0.8 1.8 Q0.8 0.8 1.8 0.8 H6.8 L8.6 3 H17.4 Q18.4 3 18.4 4 V13.6 Q18.4 14.6 17.4 14.6 H1.8 Q0.8 14.6 0.8 13.6 Z" fill="#fff" stroke="#a8a8a8" stroke-width="1.3"/></svg>
<svg class="b" style="left:54.5px;top:859.1px;" width="16" height="11" viewBox="0 0 16 11"><path d="M1.2 1.6 L7.6 8 L14 1.6" fill="none" stroke="#444" stroke-width="2.7"/></svg>
<span class="t" style="left:79.5px;top:856.2px;font-size:16.1px;color:#333;letter-spacing:-0.028px;">Parts (2)</span>
<svg class="b" style="left:80.5px;top:888.2px;" width="21" height="18" viewBox="0 0 21 18"><g fill="#fff" stroke="#555" stroke-width="1.2" stroke-linejoin="round"><path d="M1 9.4 L4 7.2 H9.6 V3 L12.6 0.8 H19.4 V13.4 L16.4 16.6 H1 Z"/><path d="M1 9.4 H9.6 V16.6 M9.6 9.4 L12.6 7.2 M9.6 3 H16.4 V16.6 M16.4 3 L19.4 0.8" fill="none"/></g></svg>
<span class="t" style="left:107.0px;top:889.1px;font-size:16.1px;color:#333;letter-spacing:-0.171px;">Origin Cube</span>
<svg class="b" style="left:80.5px;top:920px;" width="21" height="18" viewBox="0 0 21 18"><g fill="#fff" stroke="#b0b0b0" stroke-width="1.2" stroke-linejoin="round"><path d="M1 9.4 L4 7.2 H9.6 V3 L12.6 0.8 H19.4 V13.4 L16.4 16.6 H1 Z"/><path d="M1 9.4 H9.6 V16.6 M9.6 9.4 L12.6 7.2 M9.6 3 H16.4 V16.6 M16.4 3 L19.4 0.8" fill="none"/></g></svg>
<span class="t" style="left:107.0px;top:920.6px;font-size:16.1px;color:#a9a9a9;letter-spacing:0.013px;">Tube 1&quot;x1&quot;x12&quot;</span>
<div class="b" style="left:450px;top:644.5px;width:41px;height:42.5px;border:1px solid #a0a0a0;background:#fff;"></div>
<svg class="b" style="left:457px;top:654px;" width="28" height="26" viewBox="0 0 28 26"><path d="M2 2.6 L6 6.6 L10 2.6" fill="none" stroke="#333" stroke-width="1.6"/><path d="M12.4 4 H25 M8.8 10.3 H25 M8.8 16.5 H25 M8.8 22.8 H25" stroke="#555" stroke-width="1.5"/><path d="M6 9.4 V24" stroke="#666" stroke-width="1.8"/></svg>
<div class="b" style="left:468px;top:100px;width:275px;height:270px;background:#fff;box-shadow:0 4px 12px rgba(0,0,0,0.28),0 1px 3px rgba(0,0,0,0.1);"></div>
<span class="t" style="left:475.2px;top:111.1px;font-size:15.3px;color:#222;letter-spacing:0.119px;font-weight:bold;">Plate Sketch</span>
<div class="b" style="left:468px;top:135px;width:275px;height:1px;background:#d8d8d8;"></div>
<div class="b" style="left:673px;top:100px;width:35px;height:35px;background:#099209;"></div>
<svg class="b" style="left:673px;top:100px;" width="35" height="35" viewBox="0 0 35 35"><path d="M8.6 17.4 L15 23.8 L26.2 11.4" fill="none" stroke="#fff" stroke-width="3.6"/></svg>
<svg class="b" style="left:717px;top:110px;" width="17" height="16" viewBox="0 0 17 16"><path d="M2 1.6 L15 14.6 M15 1.6 L2 14.6" stroke="#c8202d" stroke-width="3.6"/></svg>
<div class="b" style="left:471px;top:142px;width:235px;height:53.4px;border:1px solid #d9d9d9;border-radius:2px;"></div>
<span class="t" style="left:478.4px;top:151.4px;font-size:12.6px;color:#555;letter-spacing:-0.023px;">Sketch plane</span>
<span class="t" style="left:480.2px;top:171.6px;font-size:16.1px;color:#666;letter-spacing:0.030px;">Face of Tube Extrude</span>
<svg class="b" style="left:681px;top:175.5px;" width="11" height="11" viewBox="0 0 11 11"><path d="M1 1 L10 10 M10 1 L1 10" stroke="#555" stroke-width="1.3"/></svg>
<svg class="b" style="left:710px;top:146px;" width="24" height="24" viewBox="0 0 24 24"><circle cx="12" cy="12" r="10.6" fill="none" stroke="#333" stroke-width="1.2"/><circle cx="12" cy="12" r="8" fill="none" stroke="#333" stroke-width="1.3"/><path d="M12 4 V12 H20" fill="none" stroke="#333" stroke-width="1.4"/></svg>
<div class="b" style="left:473px;top:213.0px;width:15px;height:15px;background:#1a53b8;border-radius:3px;"></div>
<svg class="b" style="left:473px;top:213.0px;" width="15" height="15" viewBox="0 0 15 15"><path d="M3.4 7.8 L6.4 10.8 L11.8 4.6" fill="none" stroke="#fff" stroke-width="2.2"/></svg>
<span class="t" style="left:492.6px;top:211.7px;font-size:16.2px;color:#555;letter-spacing:0.214px;">Disable imprinting</span>
<div class="b" style="left:473px;top:247.0px;width:15px;height:15px;background:#fff;border:1px solid #767676;border-radius:3px;"></div>
<span class="t" style="left:492.6px;top:245.7px;font-size:16.2px;color:#555;letter-spacing:0.175px;">Show constraints</span>
<div class="b" style="left:473px;top:281.0px;width:15px;height:15px;background:#1a53b8;border-radius:3px;"></div>
<svg class="b" style="left:473px;top:281.0px;" width="15" height="15" viewBox="0 0 15 15"><path d="M3.4 7.8 L6.4 10.8 L11.8 4.6" fill="none" stroke="#fff" stroke-width="2.2"/></svg>
<span class="t" style="left:492.6px;top:279.7px;font-size:16.2px;color:#555;letter-spacing:-0.032px;">Show expressions</span>
<div class="b" style="left:473px;top:315.0px;width:15px;height:15px;background:#1a53b8;border-radius:3px;"></div>
<svg class="b" style="left:473px;top:315.0px;" width="15" height="15" viewBox="0 0 15 15"><path d="M3.4 7.8 L6.4 10.8 L11.8 4.6" fill="none" stroke="#fff" stroke-width="2.2"/></svg>
<span class="t" style="left:492.6px;top:313.7px;font-size:16.2px;color:#555;letter-spacing:0.020px;">Show overdefined</span>
<svg class="b" style="left:720.5px;top:348px;" width="16" height="16" viewBox="0 0 16 16"><circle cx="8" cy="8" r="7.6" fill="#bdbdbd"/><path d="M5.6 6.4 Q5.6 3.8 8.1 3.8 Q10.6 3.8 10.6 6 Q10.6 7.2 9.4 7.9 Q8.2 8.6 8.2 9.8" fill="none" stroke="#fff" stroke-width="1.7"/><circle cx="8.2" cy="12.2" r="1.1" fill="#fff"/></svg>
<svg class="b" style="left:0px;top:0px;" width="2398" height="1294" viewBox="0 0 2398 1294"><g><rect x="1573.2" y="935.4" width="247.6" height="247.4" fill="#bcbcbc"/>
<path d="M985.9 441.0 A30.9 30.9 0 0 1 1017.0 410.1 L1144.0 410.1 A30.9 30.9 0 0 1 1148.0 410.4 L1686.6 481.5 A146.6 146.6 0 0 1 1813.3 612.5 L1850.7 994.0 A30.9 30.9 0 0 1 1820.0 1027.9 L1017.0 1027.9 A30.9 30.9 0 0 1 985.9 997.0 Z" fill="#e3e6e9"/>
<defs><clipPath id="pc"><path d="M985.9 441.0 A30.9 30.9 0 0 1 1017.0 410.1 L1144.0 410.1 A30.9 30.9 0 0 1 1148.0 410.4 L1686.6 481.5 A146.6 146.6 0 0 1 1813.3 612.5 L1850.7 994.0 A30.9 30.9 0 0 1 1820.0 1027.9 L1017.0 1027.9 A30.9 30.9 0 0 1 985.9 997.0 Z"/></clipPath></defs>
<rect x="1573.2" y="935.4" width="247.6" height="247.4" fill="#b5b9bc" clip-path="url(#pc)"/>
<path d="M974.0 591.0 L2360.0 591.0" stroke="#b6dcf6" stroke-width="1.9" fill="none" />
<path d="M974.9 591.0 L974.9 1256.5" stroke="#b6dcf6" stroke-width="1.9" fill="none" />
<text x="986.3" y="620.6" font-size="22.5" fill="#8cc6eb" stroke="#8cc6eb" stroke-width="0.45" letter-spacing="0.853">Plate Sketch</text>
<path d="M955.0 935.4 L2398.0 935.4" stroke="#a6a6a6" stroke-width="1.2" stroke-dasharray="37 7.5 5 7.5" fill="none" />
<path d="M955.0 1058.6 L2398.0 1058.6" stroke="#a6a6a6" stroke-width="1.2" stroke-dasharray="37 7.5 5 7.5" fill="none" />
<path d="M955.0 935.0 L955.0 1058.6" stroke="#a6a6a6" stroke-width="1.2" stroke-dasharray="37 7.5 5 7.5" fill="none" />
<path d="M955.0 379.5 L1202.0 379.5" stroke="#a6a6a6" stroke-width="1.2" stroke-dasharray="37 7.5 5 7.5" fill="none" />
<path d="M955.0 502.0 L1202.0 502.0" stroke="#a6a6a6" stroke-width="1.2" stroke-dasharray="37 7.5 5 7.5" fill="none" />
<path d="M955.0 379.5 L955.0 502.0" stroke="#a6a6a6" stroke-width="1.2" stroke-dasharray="9 6" fill="none" />
<path d="M1202.0 379.5 L1202.0 502.0" stroke="#a6a6a6" stroke-width="1.2" stroke-dasharray="37 7.5 5 7.5" fill="none" />
<circle cx="955.0" cy="379.5" r="2.6" fill="#999"/>
<circle cx="1202.0" cy="379.5" r="2.6" fill="#999"/>
<circle cx="955.0" cy="502.0" r="2.6" fill="#999"/>
<circle cx="1202.0" cy="502.0" r="2.6" fill="#999"/>
<circle cx="955.0" cy="935.0" r="2.6" fill="#999"/>
<circle cx="955.0" cy="1058.6" r="2.6" fill="#999"/>
<circle cx="1078.3" cy="688.4" r="123.6" stroke="#a6a6a6" stroke-width="1.2" fill="none" stroke-dasharray="37 7.5 5 7.5"/>
<circle cx="1078.3" cy="688.4" r="116.6" stroke="#a6a6a6" stroke-width="1.2" fill="none" stroke-dasharray="34 9"/>
<circle cx="1667.4" cy="626.8" r="146.6" stroke="#a6a6a6" stroke-width="1.2" fill="none" stroke-dasharray="37 7.5 5 7.5"/>
<circle cx="1667.4" cy="626.8" r="47.0" stroke="#a6a6a6" stroke-width="1.2" fill="none" stroke-dasharray="37 7.5 5 7.5"/>
<path d="M1079.8 571.8 L1667.0 579.0" stroke="#a6a6a6" stroke-width="1.2" stroke-dasharray="37 7.5 5 7.5" fill="none" />
<path d="M1104.0 801.0 L1678.0 672.0" stroke="#a6a6a6" stroke-width="1.2" stroke-dasharray="37 7.5 5 7.5" fill="none" />
<circle cx="1079.8" cy="571.8" r="2.6" fill="#aaa"/>
<circle cx="1667.0" cy="579.4" r="2.6" fill="#aaa"/>
<circle cx="1104.0" cy="801.0" r="2.6" fill="#aaa"/>
<circle cx="1678.0" cy="672.0" r="2.6" fill="#aaa"/>
<rect x="1573.2" y="935.4" width="247.6" height="247.4" fill="none" stroke="#26282b" stroke-width="1.9" stroke-linejoin="round"/>
<path d="M985.9 441.0 A30.9 30.9 0 0 1 1017.0 410.1 L1144.0 410.1 A30.9 30.9 0 0 1 1148.0 410.4 L1686.6 481.5 A146.6 146.6 0 0 1 1813.3 612.5 L1850.7 994.0 A30.9 30.9 0 0 1 1820.0 1027.9 L1017.0 1027.9 A30.9 30.9 0 0 1 985.9 997.0 Z" fill="none" stroke="#efa828" stroke-width="6" stroke-linejoin="round"/>
<path d="M985.9 441.0 A30.9 30.9 0 0 1 1017.0 410.1 L1144.0 410.1 A30.9 30.9 0 0 1 1148.0 410.4 L1686.6 481.5 A146.6 146.6 0 0 1 1813.3 612.5 L1850.7 994.0 A30.9 30.9 0 0 1 1820.0 1027.9 L1017.0 1027.9 A30.9 30.9 0 0 1 985.9 997.0 Z" fill="none" stroke="#c78810" stroke-width="1.5" stroke-linejoin="round"/>
<circle cx="1078.3" cy="688.4" r="69.5" stroke="#222222" stroke-width="2.2" fill="none"/>
<circle cx="1078.3" cy="688.4" r="4.6" fill="#111"/>
<circle cx="1667.4" cy="626.8" r="100.4" stroke="#222222" stroke-width="2.2" fill="none"/>
<path d="M1544.53 639.65 A123.54 123.54 0 0 1 1594.84 526.82" fill="none" stroke="#222222" stroke-width="2.2" stroke-dasharray="26.2 7.5 5 7.5 37 7.5 5 7.5 28.2"/>
<path d="M1594.84 526.82 A123.54 123.54 0 0 1 1717.71 513.97" fill="none" stroke="#222222" stroke-width="2.2" stroke-dasharray="26.2 7.5 5 7.5 37 7.5 5 7.5 28.2"/>
<path d="M1717.71 513.97 A123.54 123.54 0 0 1 1790.27 613.95" fill="none" stroke="#222222" stroke-width="2.2" stroke-dasharray="26.2 7.5 5 7.5 37 7.5 5 7.5 28.2"/>
<path d="M1790.27 613.95 A123.54 123.54 0 0 1 1739.96 726.78" fill="none" stroke="#222222" stroke-width="2.2" stroke-dasharray="26.2 7.5 5 7.5 37 7.5 5 7.5 28.2"/>
<path d="M1739.96 726.78 A123.54 123.54 0 0 1 1617.09 739.63" fill="none" stroke="#222222" stroke-width="2.2" stroke-dasharray="26.2 7.5 5 7.5 37 7.5 5 7.5 28.2"/>
<path d="M1617.09 739.63 A123.54 123.54 0 0 1 1544.53 639.65" fill="none" stroke="#222222" stroke-width="2.2" stroke-dasharray="26.2 7.5 5 7.5 37 7.5 5 7.5 28.2"/>
<circle cx="1667.4" cy="626.8" r="4.6" fill="#111"/>
<path d="M1092.1 687.0 L1659.4 627.6" stroke="#222222" stroke-width="2.4" stroke-dasharray="38 7 5 7" fill="none" />
<circle cx="1544.5" cy="639.6" r="12.0" stroke="#222222" stroke-width="2" fill="none"/>
<circle cx="1544.5" cy="639.6" r="3.2" fill="#111"/>
<circle cx="1594.8" cy="526.8" r="12.0" stroke="#222222" stroke-width="2" fill="none" stroke-dasharray="12 6.5"/>
<circle cx="1594.8" cy="526.8" r="3.2" fill="#111"/>
<circle cx="1717.7" cy="514.0" r="12.0" stroke="#222222" stroke-width="2" fill="none"/>
<circle cx="1717.7" cy="514.0" r="3.2" fill="#111"/>
<circle cx="1790.3" cy="614.0" r="12.0" stroke="#222222" stroke-width="2" fill="none" stroke-dasharray="12 6.5"/>
<circle cx="1790.3" cy="614.0" r="3.2" fill="#111"/>
<circle cx="1740.0" cy="726.8" r="12.0" stroke="#222222" stroke-width="2" fill="none"/>
<circle cx="1740.0" cy="726.8" r="3.2" fill="#111"/>
<circle cx="1617.1" cy="739.6" r="12.0" stroke="#222222" stroke-width="2" fill="none" stroke-dasharray="12 6.5"/>
<circle cx="1617.1" cy="739.6" r="3.2" fill="#111"/>
<circle cx="1017.0" cy="441.0" r="11.6" stroke="#222222" stroke-width="2.2" fill="none"/>
<circle cx="1017.0" cy="441.0" r="3.6" fill="#111"/>
<circle cx="1078.8" cy="441.0" r="11.6" stroke="#222222" stroke-width="2.2" fill="none"/>
<circle cx="1078.8" cy="441.0" r="3.6" fill="#111"/>
<circle cx="1140.5" cy="441.0" r="11.6" stroke="#222222" stroke-width="2.2" fill="none"/>
<circle cx="1140.5" cy="441.0" r="3.6" fill="#111"/>
<circle cx="1017.0" cy="997.0" r="11.6" stroke="#222222" stroke-width="2.2" fill="none"/>
<circle cx="1017.0" cy="997.0" r="3.6" fill="#111"/>
<circle cx="1078.8" cy="997.0" r="11.6" stroke="#222222" stroke-width="2.2" fill="none"/>
<circle cx="1078.8" cy="997.0" r="3.6" fill="#111"/>
<circle cx="1140.5" cy="997.0" r="11.6" stroke="#222222" stroke-width="2.2" fill="none"/>
<circle cx="1140.5" cy="997.0" r="3.6" fill="#111"/>
<circle cx="1202.3" cy="997.0" r="11.6" stroke="#222222" stroke-width="2.2" fill="none"/>
<circle cx="1202.3" cy="997.0" r="3.6" fill="#111"/>
<circle cx="1264.1" cy="997.0" r="11.6" stroke="#222222" stroke-width="2.2" fill="none"/>
<circle cx="1264.1" cy="997.0" r="3.6" fill="#111"/>
<circle cx="1325.8" cy="997.0" r="11.6" stroke="#222222" stroke-width="2.2" fill="none"/>
<circle cx="1325.8" cy="997.0" r="3.6" fill="#111"/>
<circle cx="1387.6" cy="997.0" r="11.6" stroke="#222222" stroke-width="2.2" fill="none"/>
<circle cx="1387.6" cy="997.0" r="3.6" fill="#111"/>
<circle cx="1449.4" cy="997.0" r="11.6" stroke="#222222" stroke-width="2.2" fill="none"/>
<circle cx="1449.4" cy="997.0" r="3.6" fill="#111"/>
<circle cx="1511.2" cy="997.0" r="11.6" stroke="#222222" stroke-width="2.2" fill="none"/>
<circle cx="1511.2" cy="997.0" r="3.6" fill="#111"/>
<circle cx="1572.9" cy="997.0" r="11.6" stroke="#222222" stroke-width="2.2" fill="none"/>
<circle cx="1572.9" cy="997.0" r="3.6" fill="#111"/>
<circle cx="1634.7" cy="997.0" r="11.6" stroke="#222222" stroke-width="2.2" fill="none"/>
<circle cx="1634.7" cy="997.0" r="3.6" fill="#111"/>
<circle cx="1696.5" cy="997.0" r="11.6" stroke="#333" stroke-width="2.2" fill="none"/>
<circle cx="1696.5" cy="997.0" r="3.2" stroke="#e8e8e8" stroke-width="1.2" fill="#c8c8c8"/>
<circle cx="1758.2" cy="997.0" r="11.6" stroke="#222222" stroke-width="2.2" fill="none"/>
<circle cx="1758.2" cy="997.0" r="3.6" fill="#111"/>
<circle cx="1820.0" cy="997.0" r="11.6" stroke="#222222" stroke-width="2.2" fill="none"/>
<circle cx="1820.0" cy="997.0" r="3.6" fill="#111"/>
<path d="M1029.0 441.0 L1066.8 441.0" stroke="#222222" stroke-width="2.2" fill="none" />
<path d="M1029.0 997.0 L1066.8 997.0" stroke="#222222" stroke-width="2.2" fill="none" />
<circle cx="955.0" cy="441.0" r="3.6" stroke="#222222" stroke-width="2" fill="#fff"/>
<circle cx="955.0" cy="997.0" r="3.6" stroke="#222222" stroke-width="2" fill="#fff"/>
<circle cx="985.9" cy="441.0" r="2.0" stroke="#3c2c0c" stroke-width="1.3" fill="none"/>
<circle cx="985.9" cy="997.0" r="2.0" stroke="#3c2c0c" stroke-width="1.3" fill="none"/>
<circle cx="1144.0" cy="410.1" r="2.0" stroke="#3c2c0c" stroke-width="1.3" fill="none"/>
<circle cx="1686.6" cy="481.5" r="2.0" stroke="#3c2c0c" stroke-width="1.3" fill="none"/>
<circle cx="1813.3" cy="612.5" r="2.0" stroke="#3c2c0c" stroke-width="1.3" fill="none"/>
<circle cx="1851.2" cy="994.0" r="2.0" stroke="#3c2c0c" stroke-width="1.3" fill="none"/>
<circle cx="1017.0" cy="410.1" r="1.8" fill="#444"/>
<circle cx="1017.0" cy="1027.9" r="1.8" fill="#444"/>
<circle cx="1696.7" cy="1058.6" r="5.6" stroke="#222222" stroke-width="2" fill="#fff"/>
<circle cx="1696.7" cy="1058.6" r="1.6" stroke="#222222" stroke-width="1.2" fill="#fff"/>
<path d="M955.0 268.0 L955.0 431.0" stroke="#1c1c1c" stroke-width="1.3" fill="none" />
<path d="M1017.0 268.0 L1017.0 540.5" stroke="#1c1c1c" stroke-width="1.3" fill="none" />
<path d="M955.0 273.3 L1038.0 273.3" stroke="#1c1c1c" stroke-width="1.3" fill="none" />
<path d="M955.0 273.3 L975.0 268.7 L975.0 277.9 Z" fill="#111"/>
<path d="M1017.0 273.3 L997.0 277.9 L997.0 268.7 Z" fill="#111"/>
<rect x="1039.8" y="260.0" width="41.4" height="29" fill="#fdfdfd" fill-opacity="0.13"/>
<text x="1045.8" y="281.0" font-size="20.5" fill="#3a3a3a" letter-spacing="0.450">0.5</text>
<path d="M1079.0 453.0 L1079.0 540.5" stroke="#1c1c1c" stroke-width="1.3" fill="none" />
<path d="M1017.0 537.6 L1079.0 537.6" stroke="#1c1c1c" stroke-width="1.3" fill="none" />
<path d="M1017.0 537.6 L1037.0 533.0 L1037.0 542.2 Z" fill="#111"/>
<path d="M1079.0 537.6 L1059.0 542.2 L1059.0 533.0 Z" fill="#111"/>
<rect x="1028.0" y="523.8" width="40.0" height="29" fill="#fdfdfd" fill-opacity="0.13"/>
<text x="1034.0" y="544.8" font-size="20.5" fill="#3a3a3a" letter-spacing="-0.250">0.5</text>
<rect x="1157.3" y="523.8" width="34.3" height="29" fill="#fdfdfd" fill-opacity="0.13"/>
<text x="1163.3" y="544.8" font-size="20.5" fill="#3a3a3a" letter-spacing="0.648">3x</text>
<path d="M1156.5 536.8 L1078.6 441.4" stroke="#1c1c1c" stroke-width="1.25" fill="none" />
<path d="M1078.6 441.4 L1094.8 454.0 L1087.7 459.8 Z" fill="#111"/>
<rect x="1169.7" y="308.0" width="68.3" height="29" fill="#fdfdfd" fill-opacity="0.13"/>
<text x="1175.7" y="329.0" font-size="20.5" fill="#3a3a3a" letter-spacing="0.398">R0.25</text>
<path d="M1194.8 339.0 L1156.5 409.4" stroke="#1c1c1c" stroke-width="1.25" fill="none" />
<path d="M1156.5 409.4 L1162.0 389.6 L1170.1 394.0 Z" fill="#111"/>
<rect x="848.2" y="366.6" width="68.2" height="29" fill="#fdfdfd" fill-opacity="0.13"/>
<text x="854.2" y="387.6" font-size="20.5" fill="#3a3a3a" letter-spacing="0.373">R0.25</text>
<path d="M919.0 396.0 L985.6 426.6" stroke="#1c1c1c" stroke-width="1.25" fill="none" />
<path d="M985.6 426.6 L965.5 422.4 L969.3 414.1 Z" fill="#111"/>
<rect x="839.8" y="924.0" width="81.2" height="29" fill="#fdfdfd" fill-opacity="0.13"/>
<text x="845.8" y="945.0" font-size="20.5" fill="#3a3a3a" letter-spacing="0.390">Ø0.196</text>
<path d="M921.0 955.0 L1005.2 991.0" stroke="#1c1c1c" stroke-width="1.25" fill="none" />
<path d="M1005.2 991.0 L991.9 989.0 L994.6 982.8 Z" fill="#111"/>
<rect x="808.0" y="1032.0" width="68.6" height="29" fill="#fdfdfd" fill-opacity="0.13"/>
<text x="814.0" y="1053.0" font-size="20.5" fill="#3a3a3a" letter-spacing="0.473">R0.25</text>
<path d="M879.0 1036.0 L984.6 1005.8" stroke="#1c1c1c" stroke-width="1.25" fill="none" />
<path d="M984.6 1005.8 L966.6 1015.7 L964.1 1006.9 Z" fill="#111"/>
<rect x="1135.0" y="1064.8" width="46.7" height="29" fill="#fdfdfd" fill-opacity="0.13"/>
<text x="1141.0" y="1085.8" font-size="20.5" fill="#3a3a3a" letter-spacing="0.823">14x</text>
<path d="M1135.5 1077.8 L1078.6 997.4" stroke="#1c1c1c" stroke-width="1.25" fill="none" />
<path d="M1078.6 997.4 L1093.9 1011.1 L1086.4 1016.4 Z" fill="#111"/>
<path d="M955.0 1006.6 L955.0 1139.6" stroke="#1c1c1c" stroke-width="1.3" fill="none" />
<path d="M1017.0 1009.6 L1017.0 1139.6" stroke="#1c1c1c" stroke-width="1.3" fill="none" />
<path d="M1079.0 1009.6 L1079.0 1139.6" stroke="#1c1c1c" stroke-width="1.3" fill="none" />
<path d="M909.8 1135.0 L1114.8 1135.0" stroke="#1c1c1c" stroke-width="1.3" fill="none" />
<path d="M955.0 1135.0 L975.0 1130.4 L975.0 1139.6 Z" fill="#111"/>
<path d="M1017.0 1135.0 L997.0 1139.6 L997.0 1130.4 Z" fill="#111"/>
<path d="M1017.0 1135.0 L1037.0 1130.4 L1037.0 1139.6 Z" fill="#111"/>
<path d="M1079.0 1135.0 L1059.0 1139.6 L1059.0 1130.4 Z" fill="#111"/>
<rect x="866.7" y="1121.2" width="42.3" height="29" fill="#fdfdfd" fill-opacity="0.13"/>
<text x="872.7" y="1142.2" font-size="20.5" fill="#3a3a3a" letter-spacing="0.900">0.5</text>
<rect x="1115.6" y="1121.2" width="42.3" height="29" fill="#fdfdfd" fill-opacity="0.13"/>
<text x="1121.6" y="1142.2" font-size="20.5" fill="#3a3a3a" letter-spacing="0.900">0.5</text>
<rect x="1028.4" y="818.0" width="79.1" height="29" fill="#fdfdfd" fill-opacity="0.13"/>
<text x="1034.4" y="839.0" font-size="20.5" fill="#3a3a3a" letter-spacing="-0.030">Ø1.125</text>
<path d="M1069.6 813.6 L1073.7 758.6" stroke="#1c1c1c" stroke-width="1.25" fill="none" />
<path d="M1073.7 758.6 L1076.8 778.9 L1067.6 778.2 Z" fill="#111"/>
<rect x="1387" y="332.5" width="177" height="28.8" rx="3" fill="#d7eaf8"/>
<text x="1393" y="353" font-size="17.5" fill="#444" letter-spacing="-0.186">#ClearanceFit_10_32</text>
<text x="1415.5" y="387" font-size="16" fill="#8a8a8a" font-style="italic" font-weight="bold" style="font-family:'Liberation Serif',serif" letter-spacing="-0.3">fx</text>
<rect x="1434.0" y="367.6" width="81.4" height="29" fill="#fdfdfd" fill-opacity="0.13"/>
<text x="1440.0" y="388.6" font-size="20.5" fill="#3a3a3a" letter-spacing="0.430">Ø0.201</text>
<path d="M1490.5 398.5 L1587.0 517.0" stroke="#1c1c1c" stroke-width="1.25" fill="none" />
<path d="M1587.0 517.0 L1575.5 508.3 L1580.8 504.0 Z" fill="#111"/>
<rect x="1642.5" y="345.4" width="34.9" height="29" fill="#fdfdfd" fill-opacity="0.13"/>
<text x="1648.5" y="366.4" font-size="20.5" fill="#3a3a3a" letter-spacing="1.248">6x</text>
<path d="M1660.0 376.4 L1595.4 526.4" stroke="#1c1c1c" stroke-width="1.25" fill="none" />
<path d="M1595.4 526.4 L1599.1 506.2 L1607.5 509.9 Z" fill="#111"/>
<rect x="1894.5" y="482.9" width="38.1" height="29" fill="#fdfdfd" fill-opacity="0.13"/>
<text x="1900.5" y="503.9" font-size="20.5" fill="#3a3a3a" letter-spacing="-1.248">Ø2</text>
<path d="M1893.7 507.0 L1778.0 567.3" stroke="#1c1c1c" stroke-width="1.25" fill="none" />
<path d="M1778.0 567.3 L1793.6 554.0 L1797.9 562.1 Z" fill="#111"/>
<rect x="1905.4" y="675.8" width="80.3" height="29" fill="#fdfdfd" fill-opacity="0.13"/>
<text x="1911.4" y="696.8" font-size="20.5" fill="#3a3a3a" letter-spacing="0.210">Ø1.625</text>
<path d="M1904.5 679.8 L1766.0 649.7" stroke="#1c1c1c" stroke-width="1.25" fill="none" />
<path d="M1766.0 649.7 L1786.5 649.5 L1784.6 658.4 Z" fill="#111"/></g></svg>
<div class="b" style="left:50px;top:1256px;width:401px;height:1px;background:#cfcfcf;"></div>
<svg class="b" style="left:60px;top:1265px;" width="21" height="21" viewBox="0 0 21 21"><path d="M10.4 1 V20 M1 10.5 H19.8" stroke="#555" stroke-width="3.4"/></svg>
<div class="b" style="left:93px;top:1257px;width:60px;height:33.5px;background:#e9e9e9;border-radius:0 0 0 5px;"></div>
<svg class="b" style="left:103px;top:1258.5px;" width="26" height="25" viewBox="0 0 26 25"><path d="M13 1 L17.6 5.4 V2.6 H21 V8.6 L25.2 12.6 H22.4 V24 H15.6 V15.6 H10.4 V24 H3.6 V12.6 H0.8 Z" fill="#555"/></svg>
<svg class="b" style="left:135px;top:1257px;" width="175" height="35" viewBox="0 0 175 35"><path d="M0 0 H158 L171 17 L158 33.5 H0 L11.5 17 Z" fill="#fff"/><path d="M0 0 L11.5 17 L0 33.5" fill="none" stroke="#d0d0d0" stroke-width="1"/></svg>
<span class="t" style="left:163.3px;top:1264.0px;font-size:16.5px;color:#555;letter-spacing:0.146px;">Exercise 1: Flat</span>
<div class="b" style="left:308.5px;top:1257px;width:250.5px;height:34px;background:#e6e6e6;border-radius:0 0 6px 6px;border:1px solid #d0d0d0;border-top:none;"></div>
<svg class="b" style="left:321.5px;top:1260.5px;" width="24" height="24" viewBox="0 0 24 24"><g stroke="#2a2a2a" stroke-width="1.2" fill="none" stroke-linejoin="round"><path d="M0.8 2.2 L3.4 0.8 H17.4 L22.6 5.4 V22.8 H6.2 L0.8 18 Z" fill="#fff"/>
<path d="M2.4 3.4 L4.6 2.2 H14.6 V15.6 L12.4 17.4 H2.4 Z" fill="#8a8a8a" stroke="#555" stroke-width="0.9"/><path d="M2.4 3.4 H12.4 V17.4 M12.4 3.4 L14.6 2.2" stroke="#555" stroke-width="0.9"/>
<path d="M0.8 2.2 L6.2 7 V22.8 M6.2 7 H22.6 M17.4 0.8 V5.6" /></g></svg>
<span class="t" style="left:350.0px;top:1266.0px;font-size:16.5px;color:#555;letter-spacing:0.399px;">Exercise 1 Assembly</span>
<div class="b" style="left:560.5px;top:1257px;width:250.5px;height:33.5px;background:#fff;border-radius:0 0 5px 5px;"></div>
<div class="b" style="left:561px;top:1288px;width:249.5px;height:3px;background:#1a53b8;border-radius:0 0 4px 4px;"></div>
<svg class="b" style="left:576px;top:1261px;" width="23" height="24" viewBox="0 0 23 24"><g stroke="#333" stroke-width="1.3" fill="#fff" stroke-linejoin="round"><path d="M1 8.6 L3.6 6.4 H9 V22.6 H1 Z"/><path d="M1 8.6 H6.4 V22.6 M6.4 8.6 L9 6.4" fill="none"/>
<path d="M10.4 3.6 L13.6 1 H21.4 V19.6 L18.4 22.6 H10.4 Z"/><path d="M10.4 3.6 H18.4 V22.6 M18.4 3.6 L21.4 1" fill="none"/></g></svg>
<span class="t" style="left:603.0px;top:1266.0px;font-size:16.5px;color:#333;letter-spacing:0.208px;">Exercise 1 Part Studio</span>
<svg class="b" style="left:2185px;top:110px;" width="200" height="200" viewBox="0 0 200 200"><g fill="#e3e9f0">
<path d="M100.5 5 L110.5 17 H90.5 Z"/><path d="M100.5 192 L110.5 180 H90.5 Z"/>
<path d="M6.8 98 L19.4 88.6 V107.4 Z"/><path d="M194.4 98 L181.8 88.6 V107.4 Z"/>
<rect x="64.8" y="63" width="71.5" height="73"/></g>
<g fill="#fff"><rect x="73" y="70.8" width="55" height="55.6" rx="9"/><circle cx="64.8" cy="63" r="9"/><circle cx="136.3" cy="63" r="9"/><circle cx="64.8" cy="136" r="9"/><circle cx="136.3" cy="136" r="9"/>
<rect x="56" y="63" width="8.8" height="73"/><rect x="136.3" y="63" width="9" height="73"/></g>
<g fill="none" stroke="#e3e9f0" stroke-width="7.4"><path d="M73.6 20 Q50 28 37.6 42.4"/><path d="M127.4 20 Q151 28 163.4 42.4"/></g>
<g fill="#e3e9f0"><path d="M33.4 46.4 L36 33 L46.6 44 Z"/><path d="M167.6 46.4 L165 33 L154.4 44 Z"/></g>
<path d="M62.6 63 V136.4" stroke="#2a2adf" stroke-width="1.8"/><path d="M61.8 136 H136.4" stroke="#2fae2f" stroke-width="1.8"/></svg>
<span class="t" style="left:2268.5px;top:200.0px;font-size:15.6px;color:#444;letter-spacing:-0.630px;">Right</span>
<span class="t" style="left:2243.0px;top:153.3px;font-size:17.4px;color:#2a2adf;font-weight:bold;transform:scaleX(0.78);transform-origin:0 0;">Z</span>
<span class="t" style="left:2328.6px;top:239.0px;font-size:17.4px;color:#2fae2f;font-weight:bold;transform:scaleX(0.8);transform-origin:0 0;">Y</span>
<svg class="b" style="left:2329px;top:280px;" width="24" height="23" viewBox="0 0 24 23"><g stroke="#222" stroke-width="1.1" stroke-linejoin="round"><path d="M11.6 0.8 L22.6 4.4 L11.8 9.4 L1 5.6 Z" fill="#fff"/><path d="M1 5.6 L11.8 9.4 V22.2 L1.6 16.6 Z" fill="#9a9a9a"/><path d="M11.8 9.4 L22.6 4.4 L22 16.4 L11.8 22.2 Z" fill="#dcdcdc"/></g></svg>
<svg class="b" style="left:2363.5px;top:288.5px;" width="11" height="6" viewBox="0 0 11 6"><path d="M0 0 H9.6 L4.8 5.4 Z" fill="#222"/></svg>
<div class="b" style="left:2357.6px;top:534px;width:41px;height:166.5px;border:1px solid #bdbdbd;background:#fff;"></div>
<div class="b" style="left:2357.6px;top:576px;width:41px;height:1px;background:#bdbdbd;"></div>
<div class="b" style="left:2357.6px;top:617px;width:41px;height:1px;background:#bdbdbd;"></div>
<div class="b" style="left:2357.6px;top:658px;width:41px;height:1px;background:#bdbdbd;"></div>
<div class="b" style="left:2357.6px;top:712.5px;width:41px;height:84px;border:1px solid #bdbdbd;background:#fff;"></div>
<div class="b" style="left:2357.6px;top:753.6px;width:41px;height:1px;background:#bdbdbd;"></div>
<svg class="b" style="left:2366px;top:543px;" width="26" height="27" viewBox="0 0 26 27"><path d="M5 17 L11.4 3.4 L15.6 2.2 L17 17 Z" fill="#777"/><path d="M12 17 L15.4 4 L19.6 3.4 L23 7 L23.6 17 Z" fill="#a4a4a4"/><path d="M11.4 3.4 L15.6 2.2 L17.4 8 L13.6 6.6 Z" fill="#666"/>
<path d="M8.6 9.4 L13 9.8 M7.2 12.4 L12.6 12.8 M14.6 8 L20.6 6" stroke="#8f8f8f" stroke-width="0.8"/>
<rect x="1" y="16.4" width="23.8" height="8.4" rx="2.2" fill="#fff" stroke="#777" stroke-width="1.2"/><rect x="17.6" y="17" width="6.6" height="7.2" fill="#cfcfcf"/><path d="M17.4 16.6 V24.6" stroke="#777" stroke-width="0.9"/><circle cx="5.2" cy="20.6" r="1.5" fill="none" stroke="#555" stroke-width="0.9"/></svg>
<svg class="b" style="left:2365px;top:585px;" width="28" height="26" viewBox="0 0 28 26"><rect x="1" y="1" width="12.6" height="9.6" fill="#1b55b8"/><path d="M5.2 1 V10.6 M9.4 1 V10.6 M1 4.2 H13.6 M1 7.4 H13.6" stroke="#fff" stroke-width="0.9"/><g fill="#fff" stroke="#222" stroke-width="1.3" stroke-linejoin="round"><path d="M15.6 5.6 L24.6 9.4 V19 L15.6 23.6 L6.6 19 V9.4 Z"/><path d="M6.6 9.4 L15.6 13.6 L24.6 9.4 M15.6 13.6 V23.6" fill="none"/></g></svg>
<svg class="b" style="left:2365px;top:626px;" width="28" height="26" viewBox="0 0 28 26"><rect x="1" y="1" width="12.6" height="9.6" fill="#333"/><path d="M5.2 1 V10.6 M9.4 1 V10.6 M1 4.2 H13.6 M1 7.4 H13.6" stroke="#fff" stroke-width="0.9"/><g fill="none" stroke="#333" stroke-width="1.2" stroke-linejoin="round"><path d="M4.6 10.4 Q2.4 10.4 2.6 13 Q2.8 16 1 16.6 Q2.8 17.2 2.6 20 Q2.4 22.8 4.6 22.8"/><path d="M22 4 Q24.2 4 24 7 Q23.8 12.4 25.6 13.2 Q23.8 14 24 19 Q24.2 22.8 22 22.8"/><path d="M14 8.4 L21 11.2 V17.8 L14 21.4 L7 17.8 V11.2 Z" fill="#fff"/><path d="M7 11.2 L14 14.4 L21 11.2 M14 14.4 V21.4"/></g></svg>
<svg class="b" style="left:2365px;top:667px;" width="28" height="26" viewBox="0 0 28 26"><rect x="1" y="1" width="12.6" height="9.6" fill="#333"/><path d="M5.2 1 V10.6 M9.4 1 V10.6 M1 4.2 H13.6 M1 7.4 H13.6" stroke="#fff" stroke-width="0.9"/><path d="M3.6 11.6 Q0.4 17 3.6 22.6 M22.6 5 Q26.4 13.6 22.6 22.6" fill="none" stroke="#222" stroke-width="1.7"/><path d="M8.4 9.6 Q11 9 12 12.4 L14.6 19 Q15.6 21.6 17.6 20.6 M18.6 9.6 Q16.4 9 14.6 12 L9.8 19.4 Q8.4 21.4 6.4 20" fill="none" stroke="#222" stroke-width="2.2"/></svg>
<div class="b" style="left:2363.8px;top:718.5px;width:30px;height:30px;background:#d9d9d9;border-radius:5px;"></div>
<svg class="b" style="left:2365.8px;top:720.5px;" width="26" height="26" viewBox="0 0 26 26"><path d="M13 13 L4.2 4.2 A12.4 12.4 0 0 1 21.8 4.2 Z" fill="#7ac943"/><path d="M13 13 L21.8 4.2 A12.4 12.4 0 0 1 21.8 21.8 Z" fill="#3fb3f0"/>
<path d="M13 13 L21.8 21.8 A12.4 12.4 0 0 1 4.2 21.8 Z" fill="#f0b440"/><path d="M13 13 L4.2 21.8 A12.4 12.4 0 0 1 4.2 4.2 Z" fill="#d9433f"/><path d="M4.2 4.2 L21.8 21.8 M21.8 4.2 L4.2 21.8" stroke="#d9d9d9" stroke-width="1.2"/></svg>
<div class="b" style="left:2363.8px;top:760px;width:30px;height:30px;background:#d9d9d9;border-radius:4px;"></div>
<div class="b" style="left:2365.3px;top:762px;width:27px;height:26px;background:#0a5cf5;border:1.6px solid #111;"></div>
<span class="t" style="left:2367.6px;top:765px;font-size:19.5px;font-weight:bold;color:#f2f2f2;font-family:'Liberation Serif',serif;transform:scale(0.7,1.12);transform-origin:0 50%;-webkit-text-stroke:0.7px #222;paint-order:stroke fill;">MK</span>
<svg class="b" style="left:2275px;top:1230px;" width="22" height="17" viewBox="0 0 22 17"><g fill="#fff" stroke="#222" stroke-width="1.4" stroke-linejoin="round"><path d="M1 9 H9 V5 Q9 1 14.6 1 Q20.6 1 20.6 5.4 V11 Q20.6 15.6 15 15.6 H1 Z"/><ellipse cx="14.4" cy="5.2" rx="4.2" ry="2.2"/><path d="M9 9 Q14 10 20.4 6" fill="none"/></g>
<path d="M3.6 15 V12 M6 15 V13 M8.4 15 V12 M10.8 15 V13 M13.2 15 V12 M15.6 15 V13" stroke="#222" stroke-width="0.9"/></svg>
<svg class="b" style="left:2315.5px;top:1230px;" width="26" height="18" viewBox="0 0 26 18"><path d="M1.2 16.4 Q1.2 1.4 13 1.4 Q24.8 1.4 24.8 16.4 Z" fill="#fff" stroke="#222" stroke-width="1.6" stroke-linejoin="round"/><path d="M5.8 13.2 Q6.2 5.8 13 5.8 Q19.8 5.8 20.2 13.2 H15.4 Q15 10.8 13 10.8 Q11 10.8 10.6 13.2 Z" fill="#fff" stroke="#222" stroke-width="1.4" stroke-linejoin="round"/><path d="M3 12 L4.6 12.2 M3.6 9 L5.2 9.6 M5.2 6.2 L6.6 7.2 M7.6 4.2 L8.6 5.4 M10.4 3 L10.8 4.6 M13 2.8 V4.4 M15.6 3 L15.2 4.6 M18.4 4.2 L17.4 5.4 M20.8 6.2 L19.4 7.2 M22.4 9 L20.8 9.6 M23 12 L21.4 12.2" stroke="#222" stroke-width="0.8"/></svg>
<svg class="b" style="left:2363px;top:1229px;" width="19" height="19" viewBox="0 0 19 19"><path d="M2.4 1.4 H16 M9.2 1.4 V16 M0.6 17 H17.8" stroke="#222" stroke-width="2"/><path d="M2.6 2 L0.8 11 H5.6 L3.8 2 M14.6 2 L12.8 11 H17.6 L15.8 2" fill="none" stroke="#222" stroke-width="1"/><path d="M0.6 10.4 H5.8 V12.4 H0.6 Z M12.6 10.4 H17.8 V12.4 H12.6 Z" fill="#222"/></svg>
<div class="b" style="left:0px;top:0px;width:2398px;height:1.5px;background:#2e2e2e;"></div>
<div class="b" style="left:2396.5px;top:0px;width:1.5px;height:1294px;background:#2a2a2a;"></div>
<svg class="b" style="left:0px;top:1278px;" width="2398" height="16" viewBox="0 0 2398 16"><path d="M0 4 Q0 14.6 11 14.8 L2386 14.8 Q2396.5 14.6 2396.5 4 V16 H0 Z" fill="#222"/><path d="M0 4 Q0 14.6 11 14.8 L42 14.8 V16 H0 Z" fill="#0b5aa3"/></svg>
</body></html>
